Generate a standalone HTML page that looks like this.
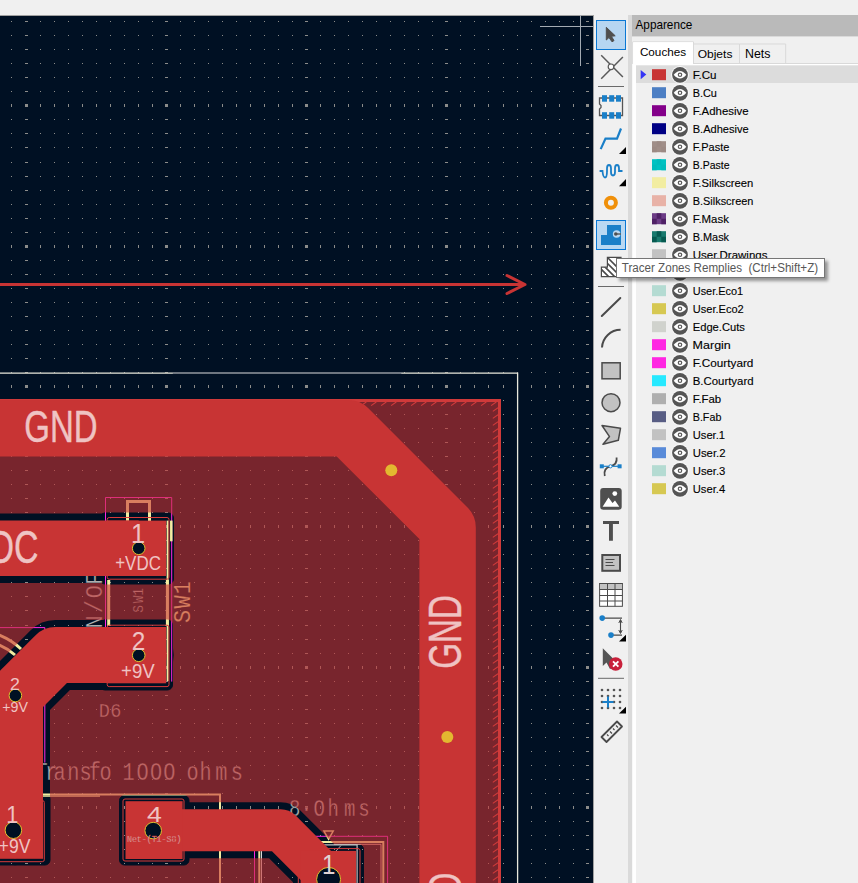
<!DOCTYPE html>
<html><head><meta charset="utf-8">
<style>
html,body{margin:0;padding:0;}
body{width:858px;height:883px;overflow:hidden;position:relative;background:#f0f0f0;font-family:"Liberation Sans",sans-serif;}
svg{display:block;}
</style></head><body>

<svg width="594" height="868" viewBox="0 15 594 868" style="position:absolute;left:0;top:15px;display:block" font-family="Liberation Sans, sans-serif">
<defs>
<mask id="zm" maskUnits="userSpaceOnUse" x="-20" y="0" width="620" height="900">
  <rect x="-10" y="399" width="510" height="500" fill="#fff"/>
  <g fill="#000" stroke="#000" stroke-linejoin="round" stroke-linecap="round">
    <path d="M-40 548.25L138.7 548.25" stroke-width="69.5" fill="none"/>
    <rect x="100" y="513" width="73.5" height="71" rx="5"/>
    <path d="M138.7 655L55.4 655L15 695.4L15 830.2" stroke-width="70" fill="none"/>
    <rect x="100" y="620" width="72.5" height="70" rx="5"/>
    <rect x="-30" y="794" width="80" height="71" rx="5"/>
    <path d="M153.2 830.2L280.6 830.2L328.7 878.3" stroke-width="56" fill="none"/>
    <rect x="119.5" y="795.5" width="69.5" height="69.5" rx="5"/>
    <rect x="293.5" y="844.5" width="70" height="70" rx="5"/>
  </g>
</mask>
</defs>
<rect x="0" y="15" width="594" height="868" fill="#001023"/>
<path d="M11 21h1v1h-1zM11 35h1v1h-1zM11 49h1v1h-1zM11 63h1v1h-1zM11 77h1v1h-1zM11 91h1v1h-1zM11 104h1v3h-1zM11 119h1v1h-1zM11 133h1v1h-1zM11 147h1v1h-1zM11 162h1v1h-1zM11 176h1v1h-1zM11 190h1v1h-1zM11 204h1v1h-1zM11 218h1v1h-1zM11 232h1v1h-1zM11 245h1v3h-1zM11 260h1v1h-1zM11 274h1v1h-1zM11 288h1v1h-1zM11 302h1v1h-1zM11 316h1v1h-1zM11 330h1v1h-1zM11 344h1v1h-1zM11 358h1v1h-1zM11 372h1v1h-1zM11 385h1v3h-1zM11 400h1v1h-1zM11 414h1v1h-1zM11 428h1v1h-1zM11 442h1v1h-1zM11 456h1v1h-1zM11 470h1v1h-1zM11 484h1v1h-1zM11 498h1v1h-1zM11 512h1v1h-1zM11 525h1v3h-1zM11 540h1v1h-1zM11 554h1v1h-1zM11 568h1v1h-1zM11 582h1v1h-1zM11 596h1v1h-1zM11 610h1v1h-1zM11 625h1v1h-1zM11 639h1v1h-1zM11 653h1v1h-1zM11 666h1v3h-1zM11 681h1v1h-1zM11 695h1v1h-1zM11 709h1v1h-1zM11 723h1v1h-1zM11 737h1v1h-1zM11 751h1v1h-1zM11 765h1v1h-1zM11 779h1v1h-1zM11 793h1v1h-1zM11 806h1v3h-1zM11 821h1v1h-1zM11 835h1v1h-1zM11 849h1v1h-1zM11 863h1v1h-1zM11 877h1v1h-1zM25 21h3v1h-3zM25 35h3v1h-3zM25 49h3v1h-3zM25 63h3v1h-3zM25 77h3v1h-3zM25 91h3v1h-3zM25 104h3v3h-3zM25 119h3v1h-3zM25 133h3v1h-3zM25 147h3v1h-3zM25 162h3v1h-3zM25 176h3v1h-3zM25 190h3v1h-3zM25 204h3v1h-3zM25 218h3v1h-3zM25 232h3v1h-3zM25 245h3v3h-3zM25 260h3v1h-3zM25 274h3v1h-3zM25 288h3v1h-3zM25 302h3v1h-3zM25 316h3v1h-3zM25 330h3v1h-3zM25 344h3v1h-3zM25 358h3v1h-3zM25 372h3v1h-3zM25 385h3v3h-3zM25 400h3v1h-3zM25 414h3v1h-3zM25 428h3v1h-3zM25 442h3v1h-3zM25 456h3v1h-3zM25 470h3v1h-3zM25 484h3v1h-3zM25 498h3v1h-3zM25 512h3v1h-3zM25 525h3v3h-3zM25 540h3v1h-3zM25 554h3v1h-3zM25 568h3v1h-3zM25 582h3v1h-3zM25 596h3v1h-3zM25 610h3v1h-3zM25 625h3v1h-3zM25 639h3v1h-3zM25 653h3v1h-3zM25 666h3v3h-3zM25 681h3v1h-3zM25 695h3v1h-3zM25 709h3v1h-3zM25 723h3v1h-3zM25 737h3v1h-3zM25 751h3v1h-3zM25 765h3v1h-3zM25 779h3v1h-3zM25 793h3v1h-3zM25 806h3v3h-3zM25 821h3v1h-3zM25 835h3v1h-3zM25 849h3v1h-3zM25 863h3v1h-3zM25 877h3v1h-3zM40 21h1v1h-1zM40 35h1v1h-1zM40 49h1v1h-1zM40 63h1v1h-1zM40 77h1v1h-1zM40 91h1v1h-1zM40 104h1v3h-1zM40 119h1v1h-1zM40 133h1v1h-1zM40 147h1v1h-1zM40 162h1v1h-1zM40 176h1v1h-1zM40 190h1v1h-1zM40 204h1v1h-1zM40 218h1v1h-1zM40 232h1v1h-1zM40 245h1v3h-1zM40 260h1v1h-1zM40 274h1v1h-1zM40 288h1v1h-1zM40 302h1v1h-1zM40 316h1v1h-1zM40 330h1v1h-1zM40 344h1v1h-1zM40 358h1v1h-1zM40 372h1v1h-1zM40 385h1v3h-1zM40 400h1v1h-1zM40 414h1v1h-1zM40 428h1v1h-1zM40 442h1v1h-1zM40 456h1v1h-1zM40 470h1v1h-1zM40 484h1v1h-1zM40 498h1v1h-1zM40 512h1v1h-1zM40 525h1v3h-1zM40 540h1v1h-1zM40 554h1v1h-1zM40 568h1v1h-1zM40 582h1v1h-1zM40 596h1v1h-1zM40 610h1v1h-1zM40 625h1v1h-1zM40 639h1v1h-1zM40 653h1v1h-1zM40 666h1v3h-1zM40 681h1v1h-1zM40 695h1v1h-1zM40 709h1v1h-1zM40 723h1v1h-1zM40 737h1v1h-1zM40 751h1v1h-1zM40 765h1v1h-1zM40 779h1v1h-1zM40 793h1v1h-1zM40 806h1v3h-1zM40 821h1v1h-1zM40 835h1v1h-1zM40 849h1v1h-1zM40 863h1v1h-1zM40 877h1v1h-1zM54 21h1v1h-1zM54 35h1v1h-1zM54 49h1v1h-1zM54 63h1v1h-1zM54 77h1v1h-1zM54 91h1v1h-1zM54 104h1v3h-1zM54 119h1v1h-1zM54 133h1v1h-1zM54 147h1v1h-1zM54 162h1v1h-1zM54 176h1v1h-1zM54 190h1v1h-1zM54 204h1v1h-1zM54 218h1v1h-1zM54 232h1v1h-1zM54 245h1v3h-1zM54 260h1v1h-1zM54 274h1v1h-1zM54 288h1v1h-1zM54 302h1v1h-1zM54 316h1v1h-1zM54 330h1v1h-1zM54 344h1v1h-1zM54 358h1v1h-1zM54 372h1v1h-1zM54 385h1v3h-1zM54 400h1v1h-1zM54 414h1v1h-1zM54 428h1v1h-1zM54 442h1v1h-1zM54 456h1v1h-1zM54 470h1v1h-1zM54 484h1v1h-1zM54 498h1v1h-1zM54 512h1v1h-1zM54 525h1v3h-1zM54 540h1v1h-1zM54 554h1v1h-1zM54 568h1v1h-1zM54 582h1v1h-1zM54 596h1v1h-1zM54 610h1v1h-1zM54 625h1v1h-1zM54 639h1v1h-1zM54 653h1v1h-1zM54 666h1v3h-1zM54 681h1v1h-1zM54 695h1v1h-1zM54 709h1v1h-1zM54 723h1v1h-1zM54 737h1v1h-1zM54 751h1v1h-1zM54 765h1v1h-1zM54 779h1v1h-1zM54 793h1v1h-1zM54 806h1v3h-1zM54 821h1v1h-1zM54 835h1v1h-1zM54 849h1v1h-1zM54 863h1v1h-1zM54 877h1v1h-1zM68 21h1v1h-1zM68 35h1v1h-1zM68 49h1v1h-1zM68 63h1v1h-1zM68 77h1v1h-1zM68 91h1v1h-1zM68 104h1v3h-1zM68 119h1v1h-1zM68 133h1v1h-1zM68 147h1v1h-1zM68 162h1v1h-1zM68 176h1v1h-1zM68 190h1v1h-1zM68 204h1v1h-1zM68 218h1v1h-1zM68 232h1v1h-1zM68 245h1v3h-1zM68 260h1v1h-1zM68 274h1v1h-1zM68 288h1v1h-1zM68 302h1v1h-1zM68 316h1v1h-1zM68 330h1v1h-1zM68 344h1v1h-1zM68 358h1v1h-1zM68 372h1v1h-1zM68 385h1v3h-1zM68 400h1v1h-1zM68 414h1v1h-1zM68 428h1v1h-1zM68 442h1v1h-1zM68 456h1v1h-1zM68 470h1v1h-1zM68 484h1v1h-1zM68 498h1v1h-1zM68 512h1v1h-1zM68 525h1v3h-1zM68 540h1v1h-1zM68 554h1v1h-1zM68 568h1v1h-1zM68 582h1v1h-1zM68 596h1v1h-1zM68 610h1v1h-1zM68 625h1v1h-1zM68 639h1v1h-1zM68 653h1v1h-1zM68 666h1v3h-1zM68 681h1v1h-1zM68 695h1v1h-1zM68 709h1v1h-1zM68 723h1v1h-1zM68 737h1v1h-1zM68 751h1v1h-1zM68 765h1v1h-1zM68 779h1v1h-1zM68 793h1v1h-1zM68 806h1v3h-1zM68 821h1v1h-1zM68 835h1v1h-1zM68 849h1v1h-1zM68 863h1v1h-1zM68 877h1v1h-1zM82 21h1v1h-1zM82 35h1v1h-1zM82 49h1v1h-1zM82 63h1v1h-1zM82 77h1v1h-1zM82 91h1v1h-1zM82 104h1v3h-1zM82 119h1v1h-1zM82 133h1v1h-1zM82 147h1v1h-1zM82 162h1v1h-1zM82 176h1v1h-1zM82 190h1v1h-1zM82 204h1v1h-1zM82 218h1v1h-1zM82 232h1v1h-1zM82 245h1v3h-1zM82 260h1v1h-1zM82 274h1v1h-1zM82 288h1v1h-1zM82 302h1v1h-1zM82 316h1v1h-1zM82 330h1v1h-1zM82 344h1v1h-1zM82 358h1v1h-1zM82 372h1v1h-1zM82 385h1v3h-1zM82 400h1v1h-1zM82 414h1v1h-1zM82 428h1v1h-1zM82 442h1v1h-1zM82 456h1v1h-1zM82 470h1v1h-1zM82 484h1v1h-1zM82 498h1v1h-1zM82 512h1v1h-1zM82 525h1v3h-1zM82 540h1v1h-1zM82 554h1v1h-1zM82 568h1v1h-1zM82 582h1v1h-1zM82 596h1v1h-1zM82 610h1v1h-1zM82 625h1v1h-1zM82 639h1v1h-1zM82 653h1v1h-1zM82 666h1v3h-1zM82 681h1v1h-1zM82 695h1v1h-1zM82 709h1v1h-1zM82 723h1v1h-1zM82 737h1v1h-1zM82 751h1v1h-1zM82 765h1v1h-1zM82 779h1v1h-1zM82 793h1v1h-1zM82 806h1v3h-1zM82 821h1v1h-1zM82 835h1v1h-1zM82 849h1v1h-1zM82 863h1v1h-1zM82 877h1v1h-1zM96 21h1v1h-1zM96 35h1v1h-1zM96 49h1v1h-1zM96 63h1v1h-1zM96 77h1v1h-1zM96 91h1v1h-1zM96 104h1v3h-1zM96 119h1v1h-1zM96 133h1v1h-1zM96 147h1v1h-1zM96 162h1v1h-1zM96 176h1v1h-1zM96 190h1v1h-1zM96 204h1v1h-1zM96 218h1v1h-1zM96 232h1v1h-1zM96 245h1v3h-1zM96 260h1v1h-1zM96 274h1v1h-1zM96 288h1v1h-1zM96 302h1v1h-1zM96 316h1v1h-1zM96 330h1v1h-1zM96 344h1v1h-1zM96 358h1v1h-1zM96 372h1v1h-1zM96 385h1v3h-1zM96 400h1v1h-1zM96 414h1v1h-1zM96 428h1v1h-1zM96 442h1v1h-1zM96 456h1v1h-1zM96 470h1v1h-1zM96 484h1v1h-1zM96 498h1v1h-1zM96 512h1v1h-1zM96 525h1v3h-1zM96 540h1v1h-1zM96 554h1v1h-1zM96 568h1v1h-1zM96 582h1v1h-1zM96 596h1v1h-1zM96 610h1v1h-1zM96 625h1v1h-1zM96 639h1v1h-1zM96 653h1v1h-1zM96 666h1v3h-1zM96 681h1v1h-1zM96 695h1v1h-1zM96 709h1v1h-1zM96 723h1v1h-1zM96 737h1v1h-1zM96 751h1v1h-1zM96 765h1v1h-1zM96 779h1v1h-1zM96 793h1v1h-1zM96 806h1v3h-1zM96 821h1v1h-1zM96 835h1v1h-1zM96 849h1v1h-1zM96 863h1v1h-1zM96 877h1v1h-1zM110 21h1v1h-1zM110 35h1v1h-1zM110 49h1v1h-1zM110 63h1v1h-1zM110 77h1v1h-1zM110 91h1v1h-1zM110 104h1v3h-1zM110 119h1v1h-1zM110 133h1v1h-1zM110 147h1v1h-1zM110 162h1v1h-1zM110 176h1v1h-1zM110 190h1v1h-1zM110 204h1v1h-1zM110 218h1v1h-1zM110 232h1v1h-1zM110 245h1v3h-1zM110 260h1v1h-1zM110 274h1v1h-1zM110 288h1v1h-1zM110 302h1v1h-1zM110 316h1v1h-1zM110 330h1v1h-1zM110 344h1v1h-1zM110 358h1v1h-1zM110 372h1v1h-1zM110 385h1v3h-1zM110 400h1v1h-1zM110 414h1v1h-1zM110 428h1v1h-1zM110 442h1v1h-1zM110 456h1v1h-1zM110 470h1v1h-1zM110 484h1v1h-1zM110 498h1v1h-1zM110 512h1v1h-1zM110 525h1v3h-1zM110 540h1v1h-1zM110 554h1v1h-1zM110 568h1v1h-1zM110 582h1v1h-1zM110 596h1v1h-1zM110 610h1v1h-1zM110 625h1v1h-1zM110 639h1v1h-1zM110 653h1v1h-1zM110 666h1v3h-1zM110 681h1v1h-1zM110 695h1v1h-1zM110 709h1v1h-1zM110 723h1v1h-1zM110 737h1v1h-1zM110 751h1v1h-1zM110 765h1v1h-1zM110 779h1v1h-1zM110 793h1v1h-1zM110 806h1v3h-1zM110 821h1v1h-1zM110 835h1v1h-1zM110 849h1v1h-1zM110 863h1v1h-1zM110 877h1v1h-1zM124 21h1v1h-1zM124 35h1v1h-1zM124 49h1v1h-1zM124 63h1v1h-1zM124 77h1v1h-1zM124 91h1v1h-1zM124 104h1v3h-1zM124 119h1v1h-1zM124 133h1v1h-1zM124 147h1v1h-1zM124 162h1v1h-1zM124 176h1v1h-1zM124 190h1v1h-1zM124 204h1v1h-1zM124 218h1v1h-1zM124 232h1v1h-1zM124 245h1v3h-1zM124 260h1v1h-1zM124 274h1v1h-1zM124 288h1v1h-1zM124 302h1v1h-1zM124 316h1v1h-1zM124 330h1v1h-1zM124 344h1v1h-1zM124 358h1v1h-1zM124 372h1v1h-1zM124 385h1v3h-1zM124 400h1v1h-1zM124 414h1v1h-1zM124 428h1v1h-1zM124 442h1v1h-1zM124 456h1v1h-1zM124 470h1v1h-1zM124 484h1v1h-1zM124 498h1v1h-1zM124 512h1v1h-1zM124 525h1v3h-1zM124 540h1v1h-1zM124 554h1v1h-1zM124 568h1v1h-1zM124 582h1v1h-1zM124 596h1v1h-1zM124 610h1v1h-1zM124 625h1v1h-1zM124 639h1v1h-1zM124 653h1v1h-1zM124 666h1v3h-1zM124 681h1v1h-1zM124 695h1v1h-1zM124 709h1v1h-1zM124 723h1v1h-1zM124 737h1v1h-1zM124 751h1v1h-1zM124 765h1v1h-1zM124 779h1v1h-1zM124 793h1v1h-1zM124 806h1v3h-1zM124 821h1v1h-1zM124 835h1v1h-1zM124 849h1v1h-1zM124 863h1v1h-1zM124 877h1v1h-1zM138 21h1v1h-1zM138 35h1v1h-1zM138 49h1v1h-1zM138 63h1v1h-1zM138 77h1v1h-1zM138 91h1v1h-1zM138 104h1v3h-1zM138 119h1v1h-1zM138 133h1v1h-1zM138 147h1v1h-1zM138 162h1v1h-1zM138 176h1v1h-1zM138 190h1v1h-1zM138 204h1v1h-1zM138 218h1v1h-1zM138 232h1v1h-1zM138 245h1v3h-1zM138 260h1v1h-1zM138 274h1v1h-1zM138 288h1v1h-1zM138 302h1v1h-1zM138 316h1v1h-1zM138 330h1v1h-1zM138 344h1v1h-1zM138 358h1v1h-1zM138 372h1v1h-1zM138 385h1v3h-1zM138 400h1v1h-1zM138 414h1v1h-1zM138 428h1v1h-1zM138 442h1v1h-1zM138 456h1v1h-1zM138 470h1v1h-1zM138 484h1v1h-1zM138 498h1v1h-1zM138 512h1v1h-1zM138 525h1v3h-1zM138 540h1v1h-1zM138 554h1v1h-1zM138 568h1v1h-1zM138 582h1v1h-1zM138 596h1v1h-1zM138 610h1v1h-1zM138 625h1v1h-1zM138 639h1v1h-1zM138 653h1v1h-1zM138 666h1v3h-1zM138 681h1v1h-1zM138 695h1v1h-1zM138 709h1v1h-1zM138 723h1v1h-1zM138 737h1v1h-1zM138 751h1v1h-1zM138 765h1v1h-1zM138 779h1v1h-1zM138 793h1v1h-1zM138 806h1v3h-1zM138 821h1v1h-1zM138 835h1v1h-1zM138 849h1v1h-1zM138 863h1v1h-1zM138 877h1v1h-1zM152 21h1v1h-1zM152 35h1v1h-1zM152 49h1v1h-1zM152 63h1v1h-1zM152 77h1v1h-1zM152 91h1v1h-1zM152 104h1v3h-1zM152 119h1v1h-1zM152 133h1v1h-1zM152 147h1v1h-1zM152 162h1v1h-1zM152 176h1v1h-1zM152 190h1v1h-1zM152 204h1v1h-1zM152 218h1v1h-1zM152 232h1v1h-1zM152 245h1v3h-1zM152 260h1v1h-1zM152 274h1v1h-1zM152 288h1v1h-1zM152 302h1v1h-1zM152 316h1v1h-1zM152 330h1v1h-1zM152 344h1v1h-1zM152 358h1v1h-1zM152 372h1v1h-1zM152 385h1v3h-1zM152 400h1v1h-1zM152 414h1v1h-1zM152 428h1v1h-1zM152 442h1v1h-1zM152 456h1v1h-1zM152 470h1v1h-1zM152 484h1v1h-1zM152 498h1v1h-1zM152 512h1v1h-1zM152 525h1v3h-1zM152 540h1v1h-1zM152 554h1v1h-1zM152 568h1v1h-1zM152 582h1v1h-1zM152 596h1v1h-1zM152 610h1v1h-1zM152 625h1v1h-1zM152 639h1v1h-1zM152 653h1v1h-1zM152 666h1v3h-1zM152 681h1v1h-1zM152 695h1v1h-1zM152 709h1v1h-1zM152 723h1v1h-1zM152 737h1v1h-1zM152 751h1v1h-1zM152 765h1v1h-1zM152 779h1v1h-1zM152 793h1v1h-1zM152 806h1v3h-1zM152 821h1v1h-1zM152 835h1v1h-1zM152 849h1v1h-1zM152 863h1v1h-1zM152 877h1v1h-1zM165 21h3v1h-3zM165 35h3v1h-3zM165 49h3v1h-3zM165 63h3v1h-3zM165 77h3v1h-3zM165 91h3v1h-3zM165 104h3v3h-3zM165 119h3v1h-3zM165 133h3v1h-3zM165 147h3v1h-3zM165 162h3v1h-3zM165 176h3v1h-3zM165 190h3v1h-3zM165 204h3v1h-3zM165 218h3v1h-3zM165 232h3v1h-3zM165 245h3v3h-3zM165 260h3v1h-3zM165 274h3v1h-3zM165 288h3v1h-3zM165 302h3v1h-3zM165 316h3v1h-3zM165 330h3v1h-3zM165 344h3v1h-3zM165 358h3v1h-3zM165 372h3v1h-3zM165 385h3v3h-3zM165 400h3v1h-3zM165 414h3v1h-3zM165 428h3v1h-3zM165 442h3v1h-3zM165 456h3v1h-3zM165 470h3v1h-3zM165 484h3v1h-3zM165 498h3v1h-3zM165 512h3v1h-3zM165 525h3v3h-3zM165 540h3v1h-3zM165 554h3v1h-3zM165 568h3v1h-3zM165 582h3v1h-3zM165 596h3v1h-3zM165 610h3v1h-3zM165 625h3v1h-3zM165 639h3v1h-3zM165 653h3v1h-3zM165 666h3v3h-3zM165 681h3v1h-3zM165 695h3v1h-3zM165 709h3v1h-3zM165 723h3v1h-3zM165 737h3v1h-3zM165 751h3v1h-3zM165 765h3v1h-3zM165 779h3v1h-3zM165 793h3v1h-3zM165 806h3v3h-3zM165 821h3v1h-3zM165 835h3v1h-3zM165 849h3v1h-3zM165 863h3v1h-3zM165 877h3v1h-3zM180 21h1v1h-1zM180 35h1v1h-1zM180 49h1v1h-1zM180 63h1v1h-1zM180 77h1v1h-1zM180 91h1v1h-1zM180 104h1v3h-1zM180 119h1v1h-1zM180 133h1v1h-1zM180 147h1v1h-1zM180 162h1v1h-1zM180 176h1v1h-1zM180 190h1v1h-1zM180 204h1v1h-1zM180 218h1v1h-1zM180 232h1v1h-1zM180 245h1v3h-1zM180 260h1v1h-1zM180 274h1v1h-1zM180 288h1v1h-1zM180 302h1v1h-1zM180 316h1v1h-1zM180 330h1v1h-1zM180 344h1v1h-1zM180 358h1v1h-1zM180 372h1v1h-1zM180 385h1v3h-1zM180 400h1v1h-1zM180 414h1v1h-1zM180 428h1v1h-1zM180 442h1v1h-1zM180 456h1v1h-1zM180 470h1v1h-1zM180 484h1v1h-1zM180 498h1v1h-1zM180 512h1v1h-1zM180 525h1v3h-1zM180 540h1v1h-1zM180 554h1v1h-1zM180 568h1v1h-1zM180 582h1v1h-1zM180 596h1v1h-1zM180 610h1v1h-1zM180 625h1v1h-1zM180 639h1v1h-1zM180 653h1v1h-1zM180 666h1v3h-1zM180 681h1v1h-1zM180 695h1v1h-1zM180 709h1v1h-1zM180 723h1v1h-1zM180 737h1v1h-1zM180 751h1v1h-1zM180 765h1v1h-1zM180 779h1v1h-1zM180 793h1v1h-1zM180 806h1v3h-1zM180 821h1v1h-1zM180 835h1v1h-1zM180 849h1v1h-1zM180 863h1v1h-1zM180 877h1v1h-1zM194 21h1v1h-1zM194 35h1v1h-1zM194 49h1v1h-1zM194 63h1v1h-1zM194 77h1v1h-1zM194 91h1v1h-1zM194 104h1v3h-1zM194 119h1v1h-1zM194 133h1v1h-1zM194 147h1v1h-1zM194 162h1v1h-1zM194 176h1v1h-1zM194 190h1v1h-1zM194 204h1v1h-1zM194 218h1v1h-1zM194 232h1v1h-1zM194 245h1v3h-1zM194 260h1v1h-1zM194 274h1v1h-1zM194 288h1v1h-1zM194 302h1v1h-1zM194 316h1v1h-1zM194 330h1v1h-1zM194 344h1v1h-1zM194 358h1v1h-1zM194 372h1v1h-1zM194 385h1v3h-1zM194 400h1v1h-1zM194 414h1v1h-1zM194 428h1v1h-1zM194 442h1v1h-1zM194 456h1v1h-1zM194 470h1v1h-1zM194 484h1v1h-1zM194 498h1v1h-1zM194 512h1v1h-1zM194 525h1v3h-1zM194 540h1v1h-1zM194 554h1v1h-1zM194 568h1v1h-1zM194 582h1v1h-1zM194 596h1v1h-1zM194 610h1v1h-1zM194 625h1v1h-1zM194 639h1v1h-1zM194 653h1v1h-1zM194 666h1v3h-1zM194 681h1v1h-1zM194 695h1v1h-1zM194 709h1v1h-1zM194 723h1v1h-1zM194 737h1v1h-1zM194 751h1v1h-1zM194 765h1v1h-1zM194 779h1v1h-1zM194 793h1v1h-1zM194 806h1v3h-1zM194 821h1v1h-1zM194 835h1v1h-1zM194 849h1v1h-1zM194 863h1v1h-1zM194 877h1v1h-1zM208 21h1v1h-1zM208 35h1v1h-1zM208 49h1v1h-1zM208 63h1v1h-1zM208 77h1v1h-1zM208 91h1v1h-1zM208 104h1v3h-1zM208 119h1v1h-1zM208 133h1v1h-1zM208 147h1v1h-1zM208 162h1v1h-1zM208 176h1v1h-1zM208 190h1v1h-1zM208 204h1v1h-1zM208 218h1v1h-1zM208 232h1v1h-1zM208 245h1v3h-1zM208 260h1v1h-1zM208 274h1v1h-1zM208 288h1v1h-1zM208 302h1v1h-1zM208 316h1v1h-1zM208 330h1v1h-1zM208 344h1v1h-1zM208 358h1v1h-1zM208 372h1v1h-1zM208 385h1v3h-1zM208 400h1v1h-1zM208 414h1v1h-1zM208 428h1v1h-1zM208 442h1v1h-1zM208 456h1v1h-1zM208 470h1v1h-1zM208 484h1v1h-1zM208 498h1v1h-1zM208 512h1v1h-1zM208 525h1v3h-1zM208 540h1v1h-1zM208 554h1v1h-1zM208 568h1v1h-1zM208 582h1v1h-1zM208 596h1v1h-1zM208 610h1v1h-1zM208 625h1v1h-1zM208 639h1v1h-1zM208 653h1v1h-1zM208 666h1v3h-1zM208 681h1v1h-1zM208 695h1v1h-1zM208 709h1v1h-1zM208 723h1v1h-1zM208 737h1v1h-1zM208 751h1v1h-1zM208 765h1v1h-1zM208 779h1v1h-1zM208 793h1v1h-1zM208 806h1v3h-1zM208 821h1v1h-1zM208 835h1v1h-1zM208 849h1v1h-1zM208 863h1v1h-1zM208 877h1v1h-1zM222 21h1v1h-1zM222 35h1v1h-1zM222 49h1v1h-1zM222 63h1v1h-1zM222 77h1v1h-1zM222 91h1v1h-1zM222 104h1v3h-1zM222 119h1v1h-1zM222 133h1v1h-1zM222 147h1v1h-1zM222 162h1v1h-1zM222 176h1v1h-1zM222 190h1v1h-1zM222 204h1v1h-1zM222 218h1v1h-1zM222 232h1v1h-1zM222 245h1v3h-1zM222 260h1v1h-1zM222 274h1v1h-1zM222 288h1v1h-1zM222 302h1v1h-1zM222 316h1v1h-1zM222 330h1v1h-1zM222 344h1v1h-1zM222 358h1v1h-1zM222 372h1v1h-1zM222 385h1v3h-1zM222 400h1v1h-1zM222 414h1v1h-1zM222 428h1v1h-1zM222 442h1v1h-1zM222 456h1v1h-1zM222 470h1v1h-1zM222 484h1v1h-1zM222 498h1v1h-1zM222 512h1v1h-1zM222 525h1v3h-1zM222 540h1v1h-1zM222 554h1v1h-1zM222 568h1v1h-1zM222 582h1v1h-1zM222 596h1v1h-1zM222 610h1v1h-1zM222 625h1v1h-1zM222 639h1v1h-1zM222 653h1v1h-1zM222 666h1v3h-1zM222 681h1v1h-1zM222 695h1v1h-1zM222 709h1v1h-1zM222 723h1v1h-1zM222 737h1v1h-1zM222 751h1v1h-1zM222 765h1v1h-1zM222 779h1v1h-1zM222 793h1v1h-1zM222 806h1v3h-1zM222 821h1v1h-1zM222 835h1v1h-1zM222 849h1v1h-1zM222 863h1v1h-1zM222 877h1v1h-1zM236 21h1v1h-1zM236 35h1v1h-1zM236 49h1v1h-1zM236 63h1v1h-1zM236 77h1v1h-1zM236 91h1v1h-1zM236 104h1v3h-1zM236 119h1v1h-1zM236 133h1v1h-1zM236 147h1v1h-1zM236 162h1v1h-1zM236 176h1v1h-1zM236 190h1v1h-1zM236 204h1v1h-1zM236 218h1v1h-1zM236 232h1v1h-1zM236 245h1v3h-1zM236 260h1v1h-1zM236 274h1v1h-1zM236 288h1v1h-1zM236 302h1v1h-1zM236 316h1v1h-1zM236 330h1v1h-1zM236 344h1v1h-1zM236 358h1v1h-1zM236 372h1v1h-1zM236 385h1v3h-1zM236 400h1v1h-1zM236 414h1v1h-1zM236 428h1v1h-1zM236 442h1v1h-1zM236 456h1v1h-1zM236 470h1v1h-1zM236 484h1v1h-1zM236 498h1v1h-1zM236 512h1v1h-1zM236 525h1v3h-1zM236 540h1v1h-1zM236 554h1v1h-1zM236 568h1v1h-1zM236 582h1v1h-1zM236 596h1v1h-1zM236 610h1v1h-1zM236 625h1v1h-1zM236 639h1v1h-1zM236 653h1v1h-1zM236 666h1v3h-1zM236 681h1v1h-1zM236 695h1v1h-1zM236 709h1v1h-1zM236 723h1v1h-1zM236 737h1v1h-1zM236 751h1v1h-1zM236 765h1v1h-1zM236 779h1v1h-1zM236 793h1v1h-1zM236 806h1v3h-1zM236 821h1v1h-1zM236 835h1v1h-1zM236 849h1v1h-1zM236 863h1v1h-1zM236 877h1v1h-1zM250 21h1v1h-1zM250 35h1v1h-1zM250 49h1v1h-1zM250 63h1v1h-1zM250 77h1v1h-1zM250 91h1v1h-1zM250 104h1v3h-1zM250 119h1v1h-1zM250 133h1v1h-1zM250 147h1v1h-1zM250 162h1v1h-1zM250 176h1v1h-1zM250 190h1v1h-1zM250 204h1v1h-1zM250 218h1v1h-1zM250 232h1v1h-1zM250 245h1v3h-1zM250 260h1v1h-1zM250 274h1v1h-1zM250 288h1v1h-1zM250 302h1v1h-1zM250 316h1v1h-1zM250 330h1v1h-1zM250 344h1v1h-1zM250 358h1v1h-1zM250 372h1v1h-1zM250 385h1v3h-1zM250 400h1v1h-1zM250 414h1v1h-1zM250 428h1v1h-1zM250 442h1v1h-1zM250 456h1v1h-1zM250 470h1v1h-1zM250 484h1v1h-1zM250 498h1v1h-1zM250 512h1v1h-1zM250 525h1v3h-1zM250 540h1v1h-1zM250 554h1v1h-1zM250 568h1v1h-1zM250 582h1v1h-1zM250 596h1v1h-1zM250 610h1v1h-1zM250 625h1v1h-1zM250 639h1v1h-1zM250 653h1v1h-1zM250 666h1v3h-1zM250 681h1v1h-1zM250 695h1v1h-1zM250 709h1v1h-1zM250 723h1v1h-1zM250 737h1v1h-1zM250 751h1v1h-1zM250 765h1v1h-1zM250 779h1v1h-1zM250 793h1v1h-1zM250 806h1v3h-1zM250 821h1v1h-1zM250 835h1v1h-1zM250 849h1v1h-1zM250 863h1v1h-1zM250 877h1v1h-1zM264 21h1v1h-1zM264 35h1v1h-1zM264 49h1v1h-1zM264 63h1v1h-1zM264 77h1v1h-1zM264 91h1v1h-1zM264 104h1v3h-1zM264 119h1v1h-1zM264 133h1v1h-1zM264 147h1v1h-1zM264 162h1v1h-1zM264 176h1v1h-1zM264 190h1v1h-1zM264 204h1v1h-1zM264 218h1v1h-1zM264 232h1v1h-1zM264 245h1v3h-1zM264 260h1v1h-1zM264 274h1v1h-1zM264 288h1v1h-1zM264 302h1v1h-1zM264 316h1v1h-1zM264 330h1v1h-1zM264 344h1v1h-1zM264 358h1v1h-1zM264 372h1v1h-1zM264 385h1v3h-1zM264 400h1v1h-1zM264 414h1v1h-1zM264 428h1v1h-1zM264 442h1v1h-1zM264 456h1v1h-1zM264 470h1v1h-1zM264 484h1v1h-1zM264 498h1v1h-1zM264 512h1v1h-1zM264 525h1v3h-1zM264 540h1v1h-1zM264 554h1v1h-1zM264 568h1v1h-1zM264 582h1v1h-1zM264 596h1v1h-1zM264 610h1v1h-1zM264 625h1v1h-1zM264 639h1v1h-1zM264 653h1v1h-1zM264 666h1v3h-1zM264 681h1v1h-1zM264 695h1v1h-1zM264 709h1v1h-1zM264 723h1v1h-1zM264 737h1v1h-1zM264 751h1v1h-1zM264 765h1v1h-1zM264 779h1v1h-1zM264 793h1v1h-1zM264 806h1v3h-1zM264 821h1v1h-1zM264 835h1v1h-1zM264 849h1v1h-1zM264 863h1v1h-1zM264 877h1v1h-1zM278 21h1v1h-1zM278 35h1v1h-1zM278 49h1v1h-1zM278 63h1v1h-1zM278 77h1v1h-1zM278 91h1v1h-1zM278 104h1v3h-1zM278 119h1v1h-1zM278 133h1v1h-1zM278 147h1v1h-1zM278 162h1v1h-1zM278 176h1v1h-1zM278 190h1v1h-1zM278 204h1v1h-1zM278 218h1v1h-1zM278 232h1v1h-1zM278 245h1v3h-1zM278 260h1v1h-1zM278 274h1v1h-1zM278 288h1v1h-1zM278 302h1v1h-1zM278 316h1v1h-1zM278 330h1v1h-1zM278 344h1v1h-1zM278 358h1v1h-1zM278 372h1v1h-1zM278 385h1v3h-1zM278 400h1v1h-1zM278 414h1v1h-1zM278 428h1v1h-1zM278 442h1v1h-1zM278 456h1v1h-1zM278 470h1v1h-1zM278 484h1v1h-1zM278 498h1v1h-1zM278 512h1v1h-1zM278 525h1v3h-1zM278 540h1v1h-1zM278 554h1v1h-1zM278 568h1v1h-1zM278 582h1v1h-1zM278 596h1v1h-1zM278 610h1v1h-1zM278 625h1v1h-1zM278 639h1v1h-1zM278 653h1v1h-1zM278 666h1v3h-1zM278 681h1v1h-1zM278 695h1v1h-1zM278 709h1v1h-1zM278 723h1v1h-1zM278 737h1v1h-1zM278 751h1v1h-1zM278 765h1v1h-1zM278 779h1v1h-1zM278 793h1v1h-1zM278 806h1v3h-1zM278 821h1v1h-1zM278 835h1v1h-1zM278 849h1v1h-1zM278 863h1v1h-1zM278 877h1v1h-1zM292 21h1v1h-1zM292 35h1v1h-1zM292 49h1v1h-1zM292 63h1v1h-1zM292 77h1v1h-1zM292 91h1v1h-1zM292 104h1v3h-1zM292 119h1v1h-1zM292 133h1v1h-1zM292 147h1v1h-1zM292 162h1v1h-1zM292 176h1v1h-1zM292 190h1v1h-1zM292 204h1v1h-1zM292 218h1v1h-1zM292 232h1v1h-1zM292 245h1v3h-1zM292 260h1v1h-1zM292 274h1v1h-1zM292 288h1v1h-1zM292 302h1v1h-1zM292 316h1v1h-1zM292 330h1v1h-1zM292 344h1v1h-1zM292 358h1v1h-1zM292 372h1v1h-1zM292 385h1v3h-1zM292 400h1v1h-1zM292 414h1v1h-1zM292 428h1v1h-1zM292 442h1v1h-1zM292 456h1v1h-1zM292 470h1v1h-1zM292 484h1v1h-1zM292 498h1v1h-1zM292 512h1v1h-1zM292 525h1v3h-1zM292 540h1v1h-1zM292 554h1v1h-1zM292 568h1v1h-1zM292 582h1v1h-1zM292 596h1v1h-1zM292 610h1v1h-1zM292 625h1v1h-1zM292 639h1v1h-1zM292 653h1v1h-1zM292 666h1v3h-1zM292 681h1v1h-1zM292 695h1v1h-1zM292 709h1v1h-1zM292 723h1v1h-1zM292 737h1v1h-1zM292 751h1v1h-1zM292 765h1v1h-1zM292 779h1v1h-1zM292 793h1v1h-1zM292 806h1v3h-1zM292 821h1v1h-1zM292 835h1v1h-1zM292 849h1v1h-1zM292 863h1v1h-1zM292 877h1v1h-1zM305 21h3v1h-3zM305 35h3v1h-3zM305 49h3v1h-3zM305 63h3v1h-3zM305 77h3v1h-3zM305 91h3v1h-3zM305 104h3v3h-3zM305 119h3v1h-3zM305 133h3v1h-3zM305 147h3v1h-3zM305 162h3v1h-3zM305 176h3v1h-3zM305 190h3v1h-3zM305 204h3v1h-3zM305 218h3v1h-3zM305 232h3v1h-3zM305 245h3v3h-3zM305 260h3v1h-3zM305 274h3v1h-3zM305 288h3v1h-3zM305 302h3v1h-3zM305 316h3v1h-3zM305 330h3v1h-3zM305 344h3v1h-3zM305 358h3v1h-3zM305 372h3v1h-3zM305 385h3v3h-3zM305 400h3v1h-3zM305 414h3v1h-3zM305 428h3v1h-3zM305 442h3v1h-3zM305 456h3v1h-3zM305 470h3v1h-3zM305 484h3v1h-3zM305 498h3v1h-3zM305 512h3v1h-3zM305 525h3v3h-3zM305 540h3v1h-3zM305 554h3v1h-3zM305 568h3v1h-3zM305 582h3v1h-3zM305 596h3v1h-3zM305 610h3v1h-3zM305 625h3v1h-3zM305 639h3v1h-3zM305 653h3v1h-3zM305 666h3v3h-3zM305 681h3v1h-3zM305 695h3v1h-3zM305 709h3v1h-3zM305 723h3v1h-3zM305 737h3v1h-3zM305 751h3v1h-3zM305 765h3v1h-3zM305 779h3v1h-3zM305 793h3v1h-3zM305 806h3v3h-3zM305 821h3v1h-3zM305 835h3v1h-3zM305 849h3v1h-3zM305 863h3v1h-3zM305 877h3v1h-3zM320 21h1v1h-1zM320 35h1v1h-1zM320 49h1v1h-1zM320 63h1v1h-1zM320 77h1v1h-1zM320 91h1v1h-1zM320 104h1v3h-1zM320 119h1v1h-1zM320 133h1v1h-1zM320 147h1v1h-1zM320 162h1v1h-1zM320 176h1v1h-1zM320 190h1v1h-1zM320 204h1v1h-1zM320 218h1v1h-1zM320 232h1v1h-1zM320 245h1v3h-1zM320 260h1v1h-1zM320 274h1v1h-1zM320 288h1v1h-1zM320 302h1v1h-1zM320 316h1v1h-1zM320 330h1v1h-1zM320 344h1v1h-1zM320 358h1v1h-1zM320 372h1v1h-1zM320 385h1v3h-1zM320 400h1v1h-1zM320 414h1v1h-1zM320 428h1v1h-1zM320 442h1v1h-1zM320 456h1v1h-1zM320 470h1v1h-1zM320 484h1v1h-1zM320 498h1v1h-1zM320 512h1v1h-1zM320 525h1v3h-1zM320 540h1v1h-1zM320 554h1v1h-1zM320 568h1v1h-1zM320 582h1v1h-1zM320 596h1v1h-1zM320 610h1v1h-1zM320 625h1v1h-1zM320 639h1v1h-1zM320 653h1v1h-1zM320 666h1v3h-1zM320 681h1v1h-1zM320 695h1v1h-1zM320 709h1v1h-1zM320 723h1v1h-1zM320 737h1v1h-1zM320 751h1v1h-1zM320 765h1v1h-1zM320 779h1v1h-1zM320 793h1v1h-1zM320 806h1v3h-1zM320 821h1v1h-1zM320 835h1v1h-1zM320 849h1v1h-1zM320 863h1v1h-1zM320 877h1v1h-1zM334 21h1v1h-1zM334 35h1v1h-1zM334 49h1v1h-1zM334 63h1v1h-1zM334 77h1v1h-1zM334 91h1v1h-1zM334 104h1v3h-1zM334 119h1v1h-1zM334 133h1v1h-1zM334 147h1v1h-1zM334 162h1v1h-1zM334 176h1v1h-1zM334 190h1v1h-1zM334 204h1v1h-1zM334 218h1v1h-1zM334 232h1v1h-1zM334 245h1v3h-1zM334 260h1v1h-1zM334 274h1v1h-1zM334 288h1v1h-1zM334 302h1v1h-1zM334 316h1v1h-1zM334 330h1v1h-1zM334 344h1v1h-1zM334 358h1v1h-1zM334 372h1v1h-1zM334 385h1v3h-1zM334 400h1v1h-1zM334 414h1v1h-1zM334 428h1v1h-1zM334 442h1v1h-1zM334 456h1v1h-1zM334 470h1v1h-1zM334 484h1v1h-1zM334 498h1v1h-1zM334 512h1v1h-1zM334 525h1v3h-1zM334 540h1v1h-1zM334 554h1v1h-1zM334 568h1v1h-1zM334 582h1v1h-1zM334 596h1v1h-1zM334 610h1v1h-1zM334 625h1v1h-1zM334 639h1v1h-1zM334 653h1v1h-1zM334 666h1v3h-1zM334 681h1v1h-1zM334 695h1v1h-1zM334 709h1v1h-1zM334 723h1v1h-1zM334 737h1v1h-1zM334 751h1v1h-1zM334 765h1v1h-1zM334 779h1v1h-1zM334 793h1v1h-1zM334 806h1v3h-1zM334 821h1v1h-1zM334 835h1v1h-1zM334 849h1v1h-1zM334 863h1v1h-1zM334 877h1v1h-1zM348 21h1v1h-1zM348 35h1v1h-1zM348 49h1v1h-1zM348 63h1v1h-1zM348 77h1v1h-1zM348 91h1v1h-1zM348 104h1v3h-1zM348 119h1v1h-1zM348 133h1v1h-1zM348 147h1v1h-1zM348 162h1v1h-1zM348 176h1v1h-1zM348 190h1v1h-1zM348 204h1v1h-1zM348 218h1v1h-1zM348 232h1v1h-1zM348 245h1v3h-1zM348 260h1v1h-1zM348 274h1v1h-1zM348 288h1v1h-1zM348 302h1v1h-1zM348 316h1v1h-1zM348 330h1v1h-1zM348 344h1v1h-1zM348 358h1v1h-1zM348 372h1v1h-1zM348 385h1v3h-1zM348 400h1v1h-1zM348 414h1v1h-1zM348 428h1v1h-1zM348 442h1v1h-1zM348 456h1v1h-1zM348 470h1v1h-1zM348 484h1v1h-1zM348 498h1v1h-1zM348 512h1v1h-1zM348 525h1v3h-1zM348 540h1v1h-1zM348 554h1v1h-1zM348 568h1v1h-1zM348 582h1v1h-1zM348 596h1v1h-1zM348 610h1v1h-1zM348 625h1v1h-1zM348 639h1v1h-1zM348 653h1v1h-1zM348 666h1v3h-1zM348 681h1v1h-1zM348 695h1v1h-1zM348 709h1v1h-1zM348 723h1v1h-1zM348 737h1v1h-1zM348 751h1v1h-1zM348 765h1v1h-1zM348 779h1v1h-1zM348 793h1v1h-1zM348 806h1v3h-1zM348 821h1v1h-1zM348 835h1v1h-1zM348 849h1v1h-1zM348 863h1v1h-1zM348 877h1v1h-1zM362 21h1v1h-1zM362 35h1v1h-1zM362 49h1v1h-1zM362 63h1v1h-1zM362 77h1v1h-1zM362 91h1v1h-1zM362 104h1v3h-1zM362 119h1v1h-1zM362 133h1v1h-1zM362 147h1v1h-1zM362 162h1v1h-1zM362 176h1v1h-1zM362 190h1v1h-1zM362 204h1v1h-1zM362 218h1v1h-1zM362 232h1v1h-1zM362 245h1v3h-1zM362 260h1v1h-1zM362 274h1v1h-1zM362 288h1v1h-1zM362 302h1v1h-1zM362 316h1v1h-1zM362 330h1v1h-1zM362 344h1v1h-1zM362 358h1v1h-1zM362 372h1v1h-1zM362 385h1v3h-1zM362 400h1v1h-1zM362 414h1v1h-1zM362 428h1v1h-1zM362 442h1v1h-1zM362 456h1v1h-1zM362 470h1v1h-1zM362 484h1v1h-1zM362 498h1v1h-1zM362 512h1v1h-1zM362 525h1v3h-1zM362 540h1v1h-1zM362 554h1v1h-1zM362 568h1v1h-1zM362 582h1v1h-1zM362 596h1v1h-1zM362 610h1v1h-1zM362 625h1v1h-1zM362 639h1v1h-1zM362 653h1v1h-1zM362 666h1v3h-1zM362 681h1v1h-1zM362 695h1v1h-1zM362 709h1v1h-1zM362 723h1v1h-1zM362 737h1v1h-1zM362 751h1v1h-1zM362 765h1v1h-1zM362 779h1v1h-1zM362 793h1v1h-1zM362 806h1v3h-1zM362 821h1v1h-1zM362 835h1v1h-1zM362 849h1v1h-1zM362 863h1v1h-1zM362 877h1v1h-1zM376 21h1v1h-1zM376 35h1v1h-1zM376 49h1v1h-1zM376 63h1v1h-1zM376 77h1v1h-1zM376 91h1v1h-1zM376 104h1v3h-1zM376 119h1v1h-1zM376 133h1v1h-1zM376 147h1v1h-1zM376 162h1v1h-1zM376 176h1v1h-1zM376 190h1v1h-1zM376 204h1v1h-1zM376 218h1v1h-1zM376 232h1v1h-1zM376 245h1v3h-1zM376 260h1v1h-1zM376 274h1v1h-1zM376 288h1v1h-1zM376 302h1v1h-1zM376 316h1v1h-1zM376 330h1v1h-1zM376 344h1v1h-1zM376 358h1v1h-1zM376 372h1v1h-1zM376 385h1v3h-1zM376 400h1v1h-1zM376 414h1v1h-1zM376 428h1v1h-1zM376 442h1v1h-1zM376 456h1v1h-1zM376 470h1v1h-1zM376 484h1v1h-1zM376 498h1v1h-1zM376 512h1v1h-1zM376 525h1v3h-1zM376 540h1v1h-1zM376 554h1v1h-1zM376 568h1v1h-1zM376 582h1v1h-1zM376 596h1v1h-1zM376 610h1v1h-1zM376 625h1v1h-1zM376 639h1v1h-1zM376 653h1v1h-1zM376 666h1v3h-1zM376 681h1v1h-1zM376 695h1v1h-1zM376 709h1v1h-1zM376 723h1v1h-1zM376 737h1v1h-1zM376 751h1v1h-1zM376 765h1v1h-1zM376 779h1v1h-1zM376 793h1v1h-1zM376 806h1v3h-1zM376 821h1v1h-1zM376 835h1v1h-1zM376 849h1v1h-1zM376 863h1v1h-1zM376 877h1v1h-1zM390 21h1v1h-1zM390 35h1v1h-1zM390 49h1v1h-1zM390 63h1v1h-1zM390 77h1v1h-1zM390 91h1v1h-1zM390 104h1v3h-1zM390 119h1v1h-1zM390 133h1v1h-1zM390 147h1v1h-1zM390 162h1v1h-1zM390 176h1v1h-1zM390 190h1v1h-1zM390 204h1v1h-1zM390 218h1v1h-1zM390 232h1v1h-1zM390 245h1v3h-1zM390 260h1v1h-1zM390 274h1v1h-1zM390 288h1v1h-1zM390 302h1v1h-1zM390 316h1v1h-1zM390 330h1v1h-1zM390 344h1v1h-1zM390 358h1v1h-1zM390 372h1v1h-1zM390 385h1v3h-1zM390 400h1v1h-1zM390 414h1v1h-1zM390 428h1v1h-1zM390 442h1v1h-1zM390 456h1v1h-1zM390 470h1v1h-1zM390 484h1v1h-1zM390 498h1v1h-1zM390 512h1v1h-1zM390 525h1v3h-1zM390 540h1v1h-1zM390 554h1v1h-1zM390 568h1v1h-1zM390 582h1v1h-1zM390 596h1v1h-1zM390 610h1v1h-1zM390 625h1v1h-1zM390 639h1v1h-1zM390 653h1v1h-1zM390 666h1v3h-1zM390 681h1v1h-1zM390 695h1v1h-1zM390 709h1v1h-1zM390 723h1v1h-1zM390 737h1v1h-1zM390 751h1v1h-1zM390 765h1v1h-1zM390 779h1v1h-1zM390 793h1v1h-1zM390 806h1v3h-1zM390 821h1v1h-1zM390 835h1v1h-1zM390 849h1v1h-1zM390 863h1v1h-1zM390 877h1v1h-1zM404 21h1v1h-1zM404 35h1v1h-1zM404 49h1v1h-1zM404 63h1v1h-1zM404 77h1v1h-1zM404 91h1v1h-1zM404 104h1v3h-1zM404 119h1v1h-1zM404 133h1v1h-1zM404 147h1v1h-1zM404 162h1v1h-1zM404 176h1v1h-1zM404 190h1v1h-1zM404 204h1v1h-1zM404 218h1v1h-1zM404 232h1v1h-1zM404 245h1v3h-1zM404 260h1v1h-1zM404 274h1v1h-1zM404 288h1v1h-1zM404 302h1v1h-1zM404 316h1v1h-1zM404 330h1v1h-1zM404 344h1v1h-1zM404 358h1v1h-1zM404 372h1v1h-1zM404 385h1v3h-1zM404 400h1v1h-1zM404 414h1v1h-1zM404 428h1v1h-1zM404 442h1v1h-1zM404 456h1v1h-1zM404 470h1v1h-1zM404 484h1v1h-1zM404 498h1v1h-1zM404 512h1v1h-1zM404 525h1v3h-1zM404 540h1v1h-1zM404 554h1v1h-1zM404 568h1v1h-1zM404 582h1v1h-1zM404 596h1v1h-1zM404 610h1v1h-1zM404 625h1v1h-1zM404 639h1v1h-1zM404 653h1v1h-1zM404 666h1v3h-1zM404 681h1v1h-1zM404 695h1v1h-1zM404 709h1v1h-1zM404 723h1v1h-1zM404 737h1v1h-1zM404 751h1v1h-1zM404 765h1v1h-1zM404 779h1v1h-1zM404 793h1v1h-1zM404 806h1v3h-1zM404 821h1v1h-1zM404 835h1v1h-1zM404 849h1v1h-1zM404 863h1v1h-1zM404 877h1v1h-1zM418 21h1v1h-1zM418 35h1v1h-1zM418 49h1v1h-1zM418 63h1v1h-1zM418 77h1v1h-1zM418 91h1v1h-1zM418 104h1v3h-1zM418 119h1v1h-1zM418 133h1v1h-1zM418 147h1v1h-1zM418 162h1v1h-1zM418 176h1v1h-1zM418 190h1v1h-1zM418 204h1v1h-1zM418 218h1v1h-1zM418 232h1v1h-1zM418 245h1v3h-1zM418 260h1v1h-1zM418 274h1v1h-1zM418 288h1v1h-1zM418 302h1v1h-1zM418 316h1v1h-1zM418 330h1v1h-1zM418 344h1v1h-1zM418 358h1v1h-1zM418 372h1v1h-1zM418 385h1v3h-1zM418 400h1v1h-1zM418 414h1v1h-1zM418 428h1v1h-1zM418 442h1v1h-1zM418 456h1v1h-1zM418 470h1v1h-1zM418 484h1v1h-1zM418 498h1v1h-1zM418 512h1v1h-1zM418 525h1v3h-1zM418 540h1v1h-1zM418 554h1v1h-1zM418 568h1v1h-1zM418 582h1v1h-1zM418 596h1v1h-1zM418 610h1v1h-1zM418 625h1v1h-1zM418 639h1v1h-1zM418 653h1v1h-1zM418 666h1v3h-1zM418 681h1v1h-1zM418 695h1v1h-1zM418 709h1v1h-1zM418 723h1v1h-1zM418 737h1v1h-1zM418 751h1v1h-1zM418 765h1v1h-1zM418 779h1v1h-1zM418 793h1v1h-1zM418 806h1v3h-1zM418 821h1v1h-1zM418 835h1v1h-1zM418 849h1v1h-1zM418 863h1v1h-1zM418 877h1v1h-1zM432 21h1v1h-1zM432 35h1v1h-1zM432 49h1v1h-1zM432 63h1v1h-1zM432 77h1v1h-1zM432 91h1v1h-1zM432 104h1v3h-1zM432 119h1v1h-1zM432 133h1v1h-1zM432 147h1v1h-1zM432 162h1v1h-1zM432 176h1v1h-1zM432 190h1v1h-1zM432 204h1v1h-1zM432 218h1v1h-1zM432 232h1v1h-1zM432 245h1v3h-1zM432 260h1v1h-1zM432 274h1v1h-1zM432 288h1v1h-1zM432 302h1v1h-1zM432 316h1v1h-1zM432 330h1v1h-1zM432 344h1v1h-1zM432 358h1v1h-1zM432 372h1v1h-1zM432 385h1v3h-1zM432 400h1v1h-1zM432 414h1v1h-1zM432 428h1v1h-1zM432 442h1v1h-1zM432 456h1v1h-1zM432 470h1v1h-1zM432 484h1v1h-1zM432 498h1v1h-1zM432 512h1v1h-1zM432 525h1v3h-1zM432 540h1v1h-1zM432 554h1v1h-1zM432 568h1v1h-1zM432 582h1v1h-1zM432 596h1v1h-1zM432 610h1v1h-1zM432 625h1v1h-1zM432 639h1v1h-1zM432 653h1v1h-1zM432 666h1v3h-1zM432 681h1v1h-1zM432 695h1v1h-1zM432 709h1v1h-1zM432 723h1v1h-1zM432 737h1v1h-1zM432 751h1v1h-1zM432 765h1v1h-1zM432 779h1v1h-1zM432 793h1v1h-1zM432 806h1v3h-1zM432 821h1v1h-1zM432 835h1v1h-1zM432 849h1v1h-1zM432 863h1v1h-1zM432 877h1v1h-1zM445 21h3v1h-3zM445 35h3v1h-3zM445 49h3v1h-3zM445 63h3v1h-3zM445 77h3v1h-3zM445 91h3v1h-3zM445 104h3v3h-3zM445 119h3v1h-3zM445 133h3v1h-3zM445 147h3v1h-3zM445 162h3v1h-3zM445 176h3v1h-3zM445 190h3v1h-3zM445 204h3v1h-3zM445 218h3v1h-3zM445 232h3v1h-3zM445 245h3v3h-3zM445 260h3v1h-3zM445 274h3v1h-3zM445 288h3v1h-3zM445 302h3v1h-3zM445 316h3v1h-3zM445 330h3v1h-3zM445 344h3v1h-3zM445 358h3v1h-3zM445 372h3v1h-3zM445 385h3v3h-3zM445 400h3v1h-3zM445 414h3v1h-3zM445 428h3v1h-3zM445 442h3v1h-3zM445 456h3v1h-3zM445 470h3v1h-3zM445 484h3v1h-3zM445 498h3v1h-3zM445 512h3v1h-3zM445 525h3v3h-3zM445 540h3v1h-3zM445 554h3v1h-3zM445 568h3v1h-3zM445 582h3v1h-3zM445 596h3v1h-3zM445 610h3v1h-3zM445 625h3v1h-3zM445 639h3v1h-3zM445 653h3v1h-3zM445 666h3v3h-3zM445 681h3v1h-3zM445 695h3v1h-3zM445 709h3v1h-3zM445 723h3v1h-3zM445 737h3v1h-3zM445 751h3v1h-3zM445 765h3v1h-3zM445 779h3v1h-3zM445 793h3v1h-3zM445 806h3v3h-3zM445 821h3v1h-3zM445 835h3v1h-3zM445 849h3v1h-3zM445 863h3v1h-3zM445 877h3v1h-3zM460 21h1v1h-1zM460 35h1v1h-1zM460 49h1v1h-1zM460 63h1v1h-1zM460 77h1v1h-1zM460 91h1v1h-1zM460 104h1v3h-1zM460 119h1v1h-1zM460 133h1v1h-1zM460 147h1v1h-1zM460 162h1v1h-1zM460 176h1v1h-1zM460 190h1v1h-1zM460 204h1v1h-1zM460 218h1v1h-1zM460 232h1v1h-1zM460 245h1v3h-1zM460 260h1v1h-1zM460 274h1v1h-1zM460 288h1v1h-1zM460 302h1v1h-1zM460 316h1v1h-1zM460 330h1v1h-1zM460 344h1v1h-1zM460 358h1v1h-1zM460 372h1v1h-1zM460 385h1v3h-1zM460 400h1v1h-1zM460 414h1v1h-1zM460 428h1v1h-1zM460 442h1v1h-1zM460 456h1v1h-1zM460 470h1v1h-1zM460 484h1v1h-1zM460 498h1v1h-1zM460 512h1v1h-1zM460 525h1v3h-1zM460 540h1v1h-1zM460 554h1v1h-1zM460 568h1v1h-1zM460 582h1v1h-1zM460 596h1v1h-1zM460 610h1v1h-1zM460 625h1v1h-1zM460 639h1v1h-1zM460 653h1v1h-1zM460 666h1v3h-1zM460 681h1v1h-1zM460 695h1v1h-1zM460 709h1v1h-1zM460 723h1v1h-1zM460 737h1v1h-1zM460 751h1v1h-1zM460 765h1v1h-1zM460 779h1v1h-1zM460 793h1v1h-1zM460 806h1v3h-1zM460 821h1v1h-1zM460 835h1v1h-1zM460 849h1v1h-1zM460 863h1v1h-1zM460 877h1v1h-1zM474 21h1v1h-1zM474 35h1v1h-1zM474 49h1v1h-1zM474 63h1v1h-1zM474 77h1v1h-1zM474 91h1v1h-1zM474 104h1v3h-1zM474 119h1v1h-1zM474 133h1v1h-1zM474 147h1v1h-1zM474 162h1v1h-1zM474 176h1v1h-1zM474 190h1v1h-1zM474 204h1v1h-1zM474 218h1v1h-1zM474 232h1v1h-1zM474 245h1v3h-1zM474 260h1v1h-1zM474 274h1v1h-1zM474 288h1v1h-1zM474 302h1v1h-1zM474 316h1v1h-1zM474 330h1v1h-1zM474 344h1v1h-1zM474 358h1v1h-1zM474 372h1v1h-1zM474 385h1v3h-1zM474 400h1v1h-1zM474 414h1v1h-1zM474 428h1v1h-1zM474 442h1v1h-1zM474 456h1v1h-1zM474 470h1v1h-1zM474 484h1v1h-1zM474 498h1v1h-1zM474 512h1v1h-1zM474 525h1v3h-1zM474 540h1v1h-1zM474 554h1v1h-1zM474 568h1v1h-1zM474 582h1v1h-1zM474 596h1v1h-1zM474 610h1v1h-1zM474 625h1v1h-1zM474 639h1v1h-1zM474 653h1v1h-1zM474 666h1v3h-1zM474 681h1v1h-1zM474 695h1v1h-1zM474 709h1v1h-1zM474 723h1v1h-1zM474 737h1v1h-1zM474 751h1v1h-1zM474 765h1v1h-1zM474 779h1v1h-1zM474 793h1v1h-1zM474 806h1v3h-1zM474 821h1v1h-1zM474 835h1v1h-1zM474 849h1v1h-1zM474 863h1v1h-1zM474 877h1v1h-1zM488 21h1v1h-1zM488 35h1v1h-1zM488 49h1v1h-1zM488 63h1v1h-1zM488 77h1v1h-1zM488 91h1v1h-1zM488 104h1v3h-1zM488 119h1v1h-1zM488 133h1v1h-1zM488 147h1v1h-1zM488 162h1v1h-1zM488 176h1v1h-1zM488 190h1v1h-1zM488 204h1v1h-1zM488 218h1v1h-1zM488 232h1v1h-1zM488 245h1v3h-1zM488 260h1v1h-1zM488 274h1v1h-1zM488 288h1v1h-1zM488 302h1v1h-1zM488 316h1v1h-1zM488 330h1v1h-1zM488 344h1v1h-1zM488 358h1v1h-1zM488 372h1v1h-1zM488 385h1v3h-1zM488 400h1v1h-1zM488 414h1v1h-1zM488 428h1v1h-1zM488 442h1v1h-1zM488 456h1v1h-1zM488 470h1v1h-1zM488 484h1v1h-1zM488 498h1v1h-1zM488 512h1v1h-1zM488 525h1v3h-1zM488 540h1v1h-1zM488 554h1v1h-1zM488 568h1v1h-1zM488 582h1v1h-1zM488 596h1v1h-1zM488 610h1v1h-1zM488 625h1v1h-1zM488 639h1v1h-1zM488 653h1v1h-1zM488 666h1v3h-1zM488 681h1v1h-1zM488 695h1v1h-1zM488 709h1v1h-1zM488 723h1v1h-1zM488 737h1v1h-1zM488 751h1v1h-1zM488 765h1v1h-1zM488 779h1v1h-1zM488 793h1v1h-1zM488 806h1v3h-1zM488 821h1v1h-1zM488 835h1v1h-1zM488 849h1v1h-1zM488 863h1v1h-1zM488 877h1v1h-1zM503 21h1v1h-1zM503 35h1v1h-1zM503 49h1v1h-1zM503 63h1v1h-1zM503 77h1v1h-1zM503 91h1v1h-1zM503 104h1v3h-1zM503 119h1v1h-1zM503 133h1v1h-1zM503 147h1v1h-1zM503 162h1v1h-1zM503 176h1v1h-1zM503 190h1v1h-1zM503 204h1v1h-1zM503 218h1v1h-1zM503 232h1v1h-1zM503 245h1v3h-1zM503 260h1v1h-1zM503 274h1v1h-1zM503 288h1v1h-1zM503 302h1v1h-1zM503 316h1v1h-1zM503 330h1v1h-1zM503 344h1v1h-1zM503 358h1v1h-1zM503 372h1v1h-1zM503 385h1v3h-1zM503 400h1v1h-1zM503 414h1v1h-1zM503 428h1v1h-1zM503 442h1v1h-1zM503 456h1v1h-1zM503 470h1v1h-1zM503 484h1v1h-1zM503 498h1v1h-1zM503 512h1v1h-1zM503 525h1v3h-1zM503 540h1v1h-1zM503 554h1v1h-1zM503 568h1v1h-1zM503 582h1v1h-1zM503 596h1v1h-1zM503 610h1v1h-1zM503 625h1v1h-1zM503 639h1v1h-1zM503 653h1v1h-1zM503 666h1v3h-1zM503 681h1v1h-1zM503 695h1v1h-1zM503 709h1v1h-1zM503 723h1v1h-1zM503 737h1v1h-1zM503 751h1v1h-1zM503 765h1v1h-1zM503 779h1v1h-1zM503 793h1v1h-1zM503 806h1v3h-1zM503 821h1v1h-1zM503 835h1v1h-1zM503 849h1v1h-1zM503 863h1v1h-1zM503 877h1v1h-1zM517 21h1v1h-1zM517 35h1v1h-1zM517 49h1v1h-1zM517 63h1v1h-1zM517 77h1v1h-1zM517 91h1v1h-1zM517 104h1v3h-1zM517 119h1v1h-1zM517 133h1v1h-1zM517 147h1v1h-1zM517 162h1v1h-1zM517 176h1v1h-1zM517 190h1v1h-1zM517 204h1v1h-1zM517 218h1v1h-1zM517 232h1v1h-1zM517 245h1v3h-1zM517 260h1v1h-1zM517 274h1v1h-1zM517 288h1v1h-1zM517 302h1v1h-1zM517 316h1v1h-1zM517 330h1v1h-1zM517 344h1v1h-1zM517 358h1v1h-1zM517 372h1v1h-1zM517 385h1v3h-1zM517 400h1v1h-1zM517 414h1v1h-1zM517 428h1v1h-1zM517 442h1v1h-1zM517 456h1v1h-1zM517 470h1v1h-1zM517 484h1v1h-1zM517 498h1v1h-1zM517 512h1v1h-1zM517 525h1v3h-1zM517 540h1v1h-1zM517 554h1v1h-1zM517 568h1v1h-1zM517 582h1v1h-1zM517 596h1v1h-1zM517 610h1v1h-1zM517 625h1v1h-1zM517 639h1v1h-1zM517 653h1v1h-1zM517 666h1v3h-1zM517 681h1v1h-1zM517 695h1v1h-1zM517 709h1v1h-1zM517 723h1v1h-1zM517 737h1v1h-1zM517 751h1v1h-1zM517 765h1v1h-1zM517 779h1v1h-1zM517 793h1v1h-1zM517 806h1v3h-1zM517 821h1v1h-1zM517 835h1v1h-1zM517 849h1v1h-1zM517 863h1v1h-1zM517 877h1v1h-1zM531 21h1v1h-1zM531 35h1v1h-1zM531 49h1v1h-1zM531 63h1v1h-1zM531 77h1v1h-1zM531 91h1v1h-1zM531 104h1v3h-1zM531 119h1v1h-1zM531 133h1v1h-1zM531 147h1v1h-1zM531 162h1v1h-1zM531 176h1v1h-1zM531 190h1v1h-1zM531 204h1v1h-1zM531 218h1v1h-1zM531 232h1v1h-1zM531 245h1v3h-1zM531 260h1v1h-1zM531 274h1v1h-1zM531 288h1v1h-1zM531 302h1v1h-1zM531 316h1v1h-1zM531 330h1v1h-1zM531 344h1v1h-1zM531 358h1v1h-1zM531 372h1v1h-1zM531 385h1v3h-1zM531 400h1v1h-1zM531 414h1v1h-1zM531 428h1v1h-1zM531 442h1v1h-1zM531 456h1v1h-1zM531 470h1v1h-1zM531 484h1v1h-1zM531 498h1v1h-1zM531 512h1v1h-1zM531 525h1v3h-1zM531 540h1v1h-1zM531 554h1v1h-1zM531 568h1v1h-1zM531 582h1v1h-1zM531 596h1v1h-1zM531 610h1v1h-1zM531 625h1v1h-1zM531 639h1v1h-1zM531 653h1v1h-1zM531 666h1v3h-1zM531 681h1v1h-1zM531 695h1v1h-1zM531 709h1v1h-1zM531 723h1v1h-1zM531 737h1v1h-1zM531 751h1v1h-1zM531 765h1v1h-1zM531 779h1v1h-1zM531 793h1v1h-1zM531 806h1v3h-1zM531 821h1v1h-1zM531 835h1v1h-1zM531 849h1v1h-1zM531 863h1v1h-1zM531 877h1v1h-1zM545 21h1v1h-1zM545 35h1v1h-1zM545 49h1v1h-1zM545 63h1v1h-1zM545 77h1v1h-1zM545 91h1v1h-1zM545 104h1v3h-1zM545 119h1v1h-1zM545 133h1v1h-1zM545 147h1v1h-1zM545 162h1v1h-1zM545 176h1v1h-1zM545 190h1v1h-1zM545 204h1v1h-1zM545 218h1v1h-1zM545 232h1v1h-1zM545 245h1v3h-1zM545 260h1v1h-1zM545 274h1v1h-1zM545 288h1v1h-1zM545 302h1v1h-1zM545 316h1v1h-1zM545 330h1v1h-1zM545 344h1v1h-1zM545 358h1v1h-1zM545 372h1v1h-1zM545 385h1v3h-1zM545 400h1v1h-1zM545 414h1v1h-1zM545 428h1v1h-1zM545 442h1v1h-1zM545 456h1v1h-1zM545 470h1v1h-1zM545 484h1v1h-1zM545 498h1v1h-1zM545 512h1v1h-1zM545 525h1v3h-1zM545 540h1v1h-1zM545 554h1v1h-1zM545 568h1v1h-1zM545 582h1v1h-1zM545 596h1v1h-1zM545 610h1v1h-1zM545 625h1v1h-1zM545 639h1v1h-1zM545 653h1v1h-1zM545 666h1v3h-1zM545 681h1v1h-1zM545 695h1v1h-1zM545 709h1v1h-1zM545 723h1v1h-1zM545 737h1v1h-1zM545 751h1v1h-1zM545 765h1v1h-1zM545 779h1v1h-1zM545 793h1v1h-1zM545 806h1v3h-1zM545 821h1v1h-1zM545 835h1v1h-1zM545 849h1v1h-1zM545 863h1v1h-1zM545 877h1v1h-1zM559 21h1v1h-1zM559 35h1v1h-1zM559 49h1v1h-1zM559 63h1v1h-1zM559 77h1v1h-1zM559 91h1v1h-1zM559 104h1v3h-1zM559 119h1v1h-1zM559 133h1v1h-1zM559 147h1v1h-1zM559 162h1v1h-1zM559 176h1v1h-1zM559 190h1v1h-1zM559 204h1v1h-1zM559 218h1v1h-1zM559 232h1v1h-1zM559 245h1v3h-1zM559 260h1v1h-1zM559 274h1v1h-1zM559 288h1v1h-1zM559 302h1v1h-1zM559 316h1v1h-1zM559 330h1v1h-1zM559 344h1v1h-1zM559 358h1v1h-1zM559 372h1v1h-1zM559 385h1v3h-1zM559 400h1v1h-1zM559 414h1v1h-1zM559 428h1v1h-1zM559 442h1v1h-1zM559 456h1v1h-1zM559 470h1v1h-1zM559 484h1v1h-1zM559 498h1v1h-1zM559 512h1v1h-1zM559 525h1v3h-1zM559 540h1v1h-1zM559 554h1v1h-1zM559 568h1v1h-1zM559 582h1v1h-1zM559 596h1v1h-1zM559 610h1v1h-1zM559 625h1v1h-1zM559 639h1v1h-1zM559 653h1v1h-1zM559 666h1v3h-1zM559 681h1v1h-1zM559 695h1v1h-1zM559 709h1v1h-1zM559 723h1v1h-1zM559 737h1v1h-1zM559 751h1v1h-1zM559 765h1v1h-1zM559 779h1v1h-1zM559 793h1v1h-1zM559 806h1v3h-1zM559 821h1v1h-1zM559 835h1v1h-1zM559 849h1v1h-1zM559 863h1v1h-1zM559 877h1v1h-1zM573 21h1v1h-1zM573 35h1v1h-1zM573 49h1v1h-1zM573 63h1v1h-1zM573 77h1v1h-1zM573 91h1v1h-1zM573 104h1v3h-1zM573 119h1v1h-1zM573 133h1v1h-1zM573 147h1v1h-1zM573 162h1v1h-1zM573 176h1v1h-1zM573 190h1v1h-1zM573 204h1v1h-1zM573 218h1v1h-1zM573 232h1v1h-1zM573 245h1v3h-1zM573 260h1v1h-1zM573 274h1v1h-1zM573 288h1v1h-1zM573 302h1v1h-1zM573 316h1v1h-1zM573 330h1v1h-1zM573 344h1v1h-1zM573 358h1v1h-1zM573 372h1v1h-1zM573 385h1v3h-1zM573 400h1v1h-1zM573 414h1v1h-1zM573 428h1v1h-1zM573 442h1v1h-1zM573 456h1v1h-1zM573 470h1v1h-1zM573 484h1v1h-1zM573 498h1v1h-1zM573 512h1v1h-1zM573 525h1v3h-1zM573 540h1v1h-1zM573 554h1v1h-1zM573 568h1v1h-1zM573 582h1v1h-1zM573 596h1v1h-1zM573 610h1v1h-1zM573 625h1v1h-1zM573 639h1v1h-1zM573 653h1v1h-1zM573 666h1v3h-1zM573 681h1v1h-1zM573 695h1v1h-1zM573 709h1v1h-1zM573 723h1v1h-1zM573 737h1v1h-1zM573 751h1v1h-1zM573 765h1v1h-1zM573 779h1v1h-1zM573 793h1v1h-1zM573 806h1v3h-1zM573 821h1v1h-1zM573 835h1v1h-1zM573 849h1v1h-1zM573 863h1v1h-1zM573 877h1v1h-1zM586 21h3v1h-3zM586 35h3v1h-3zM586 49h3v1h-3zM586 63h3v1h-3zM586 77h3v1h-3zM586 91h3v1h-3zM586 104h3v3h-3zM586 119h3v1h-3zM586 133h3v1h-3zM586 147h3v1h-3zM586 162h3v1h-3zM586 176h3v1h-3zM586 190h3v1h-3zM586 204h3v1h-3zM586 218h3v1h-3zM586 232h3v1h-3zM586 245h3v3h-3zM586 260h3v1h-3zM586 274h3v1h-3zM586 288h3v1h-3zM586 302h3v1h-3zM586 316h3v1h-3zM586 330h3v1h-3zM586 344h3v1h-3zM586 358h3v1h-3zM586 372h3v1h-3zM586 385h3v3h-3zM586 400h3v1h-3zM586 414h3v1h-3zM586 428h3v1h-3zM586 442h3v1h-3zM586 456h3v1h-3zM586 470h3v1h-3zM586 484h3v1h-3zM586 498h3v1h-3zM586 512h3v1h-3zM586 525h3v3h-3zM586 540h3v1h-3zM586 554h3v1h-3zM586 568h3v1h-3zM586 582h3v1h-3zM586 596h3v1h-3zM586 610h3v1h-3zM586 625h3v1h-3zM586 639h3v1h-3zM586 653h3v1h-3zM586 666h3v3h-3zM586 681h3v1h-3zM586 695h3v1h-3zM586 709h3v1h-3zM586 723h3v1h-3zM586 737h3v1h-3zM586 751h3v1h-3zM586 765h3v1h-3zM586 779h3v1h-3zM586 793h3v1h-3zM586 806h3v3h-3zM586 821h3v1h-3zM586 835h3v1h-3zM586 849h3v1h-3zM586 863h3v1h-3zM586 877h3v1h-3z" fill="#8c8c8a"/>
<rect x="0" y="15" width="593" height="1" fill="#a0a0a0"/>
<rect x="593" y="15" width="1" height="868" fill="#a0a0a0"/>

<path d="M540 26.5H593M580.5 15V66" stroke="#a4abb3" stroke-width="1" fill="none"/>

<path d="M0 284.5H524.5M507 275.5L525 284.5L507 293.5" stroke="#c83434" stroke-width="3" fill="none" stroke-linecap="round" stroke-linejoin="round"/>

<path d="M0 373.2H517.6V883" stroke="#e8e8dc" stroke-width="1.3" fill="none"/>
<rect x="172.8" y="372" width="228.5" height="2" fill="#6e7680"/>

<g fill="none" stroke-width="1">
  <path d="M105.5 681.6V497.5H171.7V681.6" stroke="#ff26e2"/>
  <path d="M127.5 521V501.5H149.5V521" stroke="#f2eda1" stroke-width="3"/>
  <path d="M108.7 580V626M167.4 580V626" stroke="#f2eda1" stroke-width="3"/>
  <path d="M171.3 520.6V541.3" stroke="#f2eda1" stroke-width="2.5"/>
  <path d="M167.6 520.6V681" stroke="#f2eda1" stroke-width="2"/>
  <path d="M-5 627.6H44.8V762.7" stroke="#ff26e2"/>
  <path d="M-10 632 Q8 637 21 649" stroke="#f2eda1" stroke-width="3"/>
  <path d="M-10 642 Q5 646 15 655" stroke="#f2eda1" stroke-width="3"/>
  <path d="M43 794.4H220V890" stroke="#f2eda1" stroke-width="2"/>
  <path d="M43 796.2H100" stroke="#f2eda1" stroke-width="1.3"/>
  <path d="M254.5 851V890" stroke="#ff26e2" stroke-width="1"/>
  <path d="M259.3 851V890" stroke="#f2eda1" stroke-width="2"/>
  <path d="M261.5 851V890" stroke="#d8d8d8" stroke-width="1"/>
  <path d="M315.7 890V836.3H387.6V890" stroke="#ff26e2"/>
  <path d="M323.9 831H333.2L328.6 839.2Z" stroke="#f2eda1" stroke-width="1.5"/>
  <path d="M320 842.1H383.3V890" stroke="#f2eda1" stroke-width="2"/>
  <path d="M334 844.3H381V890" stroke="#e8b2a7" stroke-width="1"/>
  <path d="M322 844.8H357.1V890" stroke="#c4c4c4" stroke-width="1.2"/>
  <path d="M336 851L341 845.5" stroke="#afafaf" stroke-width="1"/>
</g>
<text transform="translate(101.70,0) rotate(-90) scale(0.9,1)" x="-714.54 -698.43 -681.54 -664.76 -650.10 -633.98" y="0" font-size="24.39" fill="#afafaf" font-family="Liberation Mono, monospace" stroke="#001023" stroke-width="0.3">ON/OFF</text>
<text transform="translate(143.00,0) rotate(-90) scale(0.85,1)" x="-720.90 -709.60 -700.78" y="0" font-size="15.15" fill="#afafaf" font-family="Liberation Mono, monospace" stroke="#001023" stroke-width="0.3">SW1</text>
<text transform="translate(189.80,0) rotate(-90) scale(0.9,1)" x="-692.10 -676.10 -660.21" y="0" font-size="24.39" fill="#f2eda1" font-family="Liberation Mono, monospace" stroke="#001023" stroke-width="0.2">SW1</text>
<text transform="translate(0,716.90) scale(0.9,1)" x="109.82 122.48" y="0" font-size="20.61" fill="#afafaf" font-family="Liberation Mono, monospace" stroke="#001023" stroke-width="0.3">D6</text>
<text transform="translate(0,780.40) scale(0.8,1)" x="44.28 56.53 66.78 84.03 99.28 111.03 124.53 153.03 170.53 187.41 204.16 233.03 249.53 269.03 288.41" y="0" font-size="25.30" fill="#afafaf" font-family="Liberation Mono, monospace" stroke="#001023" stroke-width="0.3">Transfo1OOOohms</text>
<text transform="translate(0,815.50) scale(0.82,1)" x="352.44 366.83 382.19 399.39 419.63 436.95" y="0" font-size="23.18" fill="#afafaf" font-family="Liberation Mono, monospace" stroke="#001023" stroke-width="0.3">8·Ohms</text>

<rect x="-10" y="399" width="510" height="500" fill="#c83434" fill-opacity="0.6" mask="url(#zm)"/>
<path d="M-10 400.5H499.5V890" stroke="#d03a3a" stroke-width="3" fill="none"/>
<path d="M-3.7 402L-8.9 405.6M6.3 402L1.1 405.6M16.3 402L11.1 405.6M26.3 402L21.1 405.6M36.3 402L31.1 405.6M46.3 402L41.1 405.6M56.3 402L51.1 405.6M66.3 402L61.1 405.6M76.3 402L71.1 405.6M86.3 402L81.1 405.6M96.3 402L91.1 405.6M106.3 402L101.1 405.6M116.3 402L111.1 405.6M126.3 402L121.1 405.6M136.3 402L131.1 405.6M146.3 402L141.1 405.6M156.3 402L151.1 405.6M166.3 402L161.1 405.6M176.3 402L171.1 405.6M186.3 402L181.1 405.6M196.3 402L191.1 405.6M206.3 402L201.1 405.6M216.3 402L211.1 405.6M226.3 402L221.1 405.6M236.3 402L231.1 405.6M246.3 402L241.1 405.6M256.3 402L251.1 405.6M266.3 402L261.1 405.6M276.3 402L271.1 405.6M286.3 402L281.1 405.6M296.3 402L291.1 405.6M306.3 402L301.1 405.6M316.3 402L311.1 405.6M326.3 402L321.1 405.6M336.3 402L331.1 405.6M346.3 402L341.1 405.6M356.3 402L351.1 405.6M366.3 402L361.1 405.6M376.3 402L371.1 405.6M386.3 402L381.1 405.6M396.3 402L391.1 405.6M406.3 402L401.1 405.6M416.3 402L411.1 405.6M426.3 402L421.1 405.6M436.3 402L431.1 405.6M446.3 402L441.1 405.6M456.3 402L451.1 405.6M466.3 402L461.1 405.6M476.3 402L471.1 405.6M486.3 402L481.1 405.6M496.3 402L491.1 405.6M498 407.8L492.8 411.4M498 414.8L492.8 418.4M498 421.8L492.8 425.4M498 428.8L492.8 432.4M498 435.8L492.8 439.4M498 442.8L492.8 446.4M498 449.8L492.8 453.4M498 456.8L492.8 460.4M498 463.8L492.8 467.4M498 470.8L492.8 474.4M498 477.8L492.8 481.4M498 484.8L492.8 488.4M498 491.8L492.8 495.4M498 498.8L492.8 502.4M498 505.8L492.8 509.4M498 512.8L492.8 516.4M498 519.8L492.8 523.4M498 526.8L492.8 530.4M498 533.8L492.8 537.4M498 540.8L492.8 544.4M498 547.8L492.8 551.4M498 554.8L492.8 558.4M498 561.8L492.8 565.4M498 568.8L492.8 572.4M498 575.8L492.8 579.4M498 582.8L492.8 586.4M498 589.8L492.8 593.4M498 596.8L492.8 600.4M498 603.8L492.8 607.4M498 610.8L492.8 614.4M498 617.8L492.8 621.4M498 624.8L492.8 628.4M498 631.8L492.8 635.4M498 638.8L492.8 642.4M498 645.8L492.8 649.4M498 652.8L492.8 656.4M498 659.8L492.8 663.4M498 666.8L492.8 670.4M498 673.8L492.8 677.4M498 680.8L492.8 684.4M498 687.8L492.8 691.4M498 694.8L492.8 698.4M498 701.8L492.8 705.4M498 708.8L492.8 712.4M498 715.8L492.8 719.4M498 722.8L492.8 726.4M498 729.8L492.8 733.4M498 736.8L492.8 740.4M498 743.8L492.8 747.4M498 750.8L492.8 754.4M498 757.8L492.8 761.4M498 764.8L492.8 768.4M498 771.8L492.8 775.4M498 778.8L492.8 782.4M498 785.8L492.8 789.4M498 792.8L492.8 796.4M498 799.8L492.8 803.4M498 806.8L492.8 810.4M498 813.8L492.8 817.4M498 820.8L492.8 824.4M498 827.8L492.8 831.4M498 834.8L492.8 838.4M498 841.8L492.8 845.4M498 848.8L492.8 852.4M498 855.8L492.8 859.4M498 862.8L492.8 866.4M498 869.8L492.8 873.4M498 876.8L492.8 880.4M498 883.8L492.8 887.4" stroke="#d03a3a" stroke-width="1.1" fill="none"/>

<g fill="none" stroke="#d83a3a" stroke-width="1">
  <rect x="107.2" y="517.5" width="61.8" height="61.7" rx="2"/>
  <rect x="107.2" y="625.2" width="61.8" height="61.4" rx="2"/>
  <rect x="-20" y="800.5" width="64.3" height="61.2" rx="2"/>
  <rect x="123" y="799" width="61" height="62" rx="2"/>
  <rect x="298.3" y="848.6" width="61.7" height="61.7" rx="2"/>
</g>
<g fill="none" stroke="#c83434" stroke-linejoin="round" stroke-linecap="round">
  <path d="M-40 428.2L348.4 428.2L447.6 527.4L447.6 900" stroke-width="56.4"/>
  <path d="M-40 548.25L138.7 548.25" stroke-width="55.5" stroke-linecap="butt"/>
  <path d="M138.7 655L55.4 655L15 695.4L15 830.2" stroke-width="56"/>
  <path d="M153.2 830.2L280.6 830.2L328.7 878.3" stroke-width="42"/>
</g>
<g fill="#c83434">
  <rect x="107" y="520.6" width="59.2" height="55.4"/>
  <rect x="107" y="627" width="59.2" height="56.3"/>
  <rect x="-20" y="801" width="63.1" height="57.8"/>
  <rect x="125.5" y="801.2" width="57.1" height="57.8"/>
  <rect x="300.6" y="850.9" width="55.5" height="56"/>
</g>
<circle cx="391.3" cy="470.2" r="6" fill="#e3b830"/>
<circle cx="447.3" cy="737.1" r="6" fill="#e3b830"/>
<g fill="#001023" stroke="#e0c030" stroke-width="1">
  <circle cx="138.7" cy="548.3" r="6.3"/>
  <circle cx="138.7" cy="655.3" r="6.3"/>
  <circle cx="15.4" cy="695.5" r="6.3"/>
  <circle cx="13.4" cy="830.2" r="8.3"/>
  <circle cx="153.2" cy="830.6" r="8.3"/>
  <circle cx="328.6" cy="879.4" r="12"/>
</g>
<text x="24.35" y="442.10" font-size="44.71" textLength="73.20" lengthAdjust="spacingAndGlyphs" fill="#efc3c3" stroke="#efc3c3" stroke-width="0.45">GND</text>
<text transform="translate(461.30,667.00) rotate(-90)" x="-1.65" y="0" font-size="45.71" textLength="73.52" lengthAdjust="spacingAndGlyphs" fill="#efc3c3" stroke="#efc3c3" stroke-width="0.45">GND</text>
<text transform="translate(461.30,944.50) rotate(-90)" x="-1.65" y="0" font-size="45.71" textLength="73.52" lengthAdjust="spacingAndGlyphs" fill="#efc3c3" stroke="#efc3c3" stroke-width="0.45">GND</text>
<text x="-53.00" y="562.80" font-size="46.14" textLength="91.40" lengthAdjust="spacingAndGlyphs" fill="#efc3c3" stroke="#efc3c3" stroke-width="0.45">+VDC</text>
<text x="130.99" y="543.00" font-size="26.96" textLength="14.19" lengthAdjust="spacingAndGlyphs" fill="#efc3c3" >1</text>
<text x="115.15" y="570.40" font-size="20.00" textLength="45.75" lengthAdjust="spacingAndGlyphs" fill="#efc3c3" >+VDC</text>
<text x="131.68" y="649.70" font-size="26.00" textLength="13.57" lengthAdjust="spacingAndGlyphs" fill="#efc3c3" >2</text>
<text x="121.07" y="677.50" font-size="20.00" textLength="33.77" lengthAdjust="spacingAndGlyphs" fill="#efc3c3" >+9V</text>
<text x="10.01" y="689.70" font-size="17.00" textLength="9.90" lengthAdjust="spacingAndGlyphs" fill="#efc3c3" >2</text>
<text x="2.29" y="712.00" font-size="15.29" textLength="25.71" lengthAdjust="spacingAndGlyphs" fill="#efc3c3" >+9V</text>
<text x="6.36" y="822.60" font-size="23.62" textLength="12.15" lengthAdjust="spacingAndGlyphs" fill="#efc3c3" >1</text>
<text x="-1.38" y="853.00" font-size="20.86" textLength="31.81" lengthAdjust="spacingAndGlyphs" fill="#efc3c3" >+9V</text>
<text x="146.97" y="821.60" font-size="22.61" textLength="14.87" lengthAdjust="spacingAndGlyphs" fill="#efc3c3" >4</text>
<text x="126.94" y="842.00" font-size="9.85" textLength="54.43" lengthAdjust="spacingAndGlyphs" fill="#e4d4d4" font-family="Liberation Mono, monospace" stroke="#c83434" stroke-width="0.35">Net-(T1-S8)</text>
<text x="322.09" y="873.80" font-size="27.25" textLength="13.42" lengthAdjust="spacingAndGlyphs" fill="#e0d4d4" >1</text>
</svg>


<svg width="35" height="868" viewBox="594 15 35 868" style="position:absolute;left:594px;top:15px">
<g>
 <rect x="596.5" y="20.5" width="29" height="29" fill="#b6d6f2" stroke="#0a78d4" stroke-width="1"/>
 <path d="M606.3 27.3V40L609 37.5L612 41.8L614 40.6L611.4 36.3L615.2 35.8Z" fill="#4f4f4f" stroke="#4f4f4f" stroke-width="1" stroke-linejoin="round"/>
 <path d="M601.2 55.3L622.9 77M601.2 78.7L622.9 57" stroke="#5a5a5a" stroke-width="1.5"/>
 <circle cx="611" cy="66.8" r="2.8" fill="#fff" stroke="#5a5a5a" stroke-width="1.2"/>
 <path d="M598 86.5H624" stroke="#6a6a6a" stroke-width="1"/>
 <!-- footprint -->
 <path d="M599.5 98H622.5V115.5H599.5V109L601 107.5V105.5L599.5 104Z" fill="none" stroke="#555" stroke-width="1.3"/>
 <g fill="#1a7fc8"><rect x="602" y="95.2" width="5" height="6.5"/><rect x="609.2" y="95.2" width="5" height="6.5"/><rect x="616" y="95.2" width="5" height="6.5"/><rect x="602" y="112.2" width="5" height="6.5"/><rect x="609.2" y="112.2" width="5" height="6.5"/><rect x="616" y="112.2" width="5" height="6.5"/></g>
 <!-- route -->
 <path d="M600.7 149.1L605.5 138.6H617L621 128.5" fill="none" stroke="#1a7fc8" stroke-width="2.2"/>
 <path d="M619 154H626V147Z" fill="#000"/>
 <!-- meander -->
 <path d="M599.6 171H602.5Q603 177.5 605 177.5Q607 177.5 607 171V168.5Q607 165 609 165Q611 165 611 168.5V172Q611 175.5 613 175.5Q615 175.5 615 172V168.5Q615 165 617 165Q619 165 619 168.5V171H622.5" fill="none" stroke="#1a7fc8" stroke-width="1.8"/>
 <path d="M619 186.2H626V179Z" fill="#000"/>
 <!-- via -->
 <circle cx="610.9" cy="202.8" r="5" fill="none" stroke="#f0900a" stroke-width="4"/>
 <!-- zone (active) -->
 <rect x="596.5" y="220.5" width="29" height="29" fill="#b9d8f2" stroke="#0a78d4" stroke-width="1"/>
 <path d="M601 245V235H607V225H621V245Z" fill="#1a7fc8"/>
 <circle cx="616.6" cy="234" r="3.8" fill="#b9d8f2"/>
 <circle cx="615.8" cy="234" r="1.8" fill="#505050"/>
 <path d="M616 234H621" stroke="#505050" stroke-width="1.3"/>
 <!-- hatched zone -->
 <clipPath id="hz"><path d="M601.4 276.6V267.2H607.4V257.4H621V276.6Z"/></clipPath>
 <path d="M601.4 276.6V267.2H607.4V257.4H621V276.6Z" fill="#fff"/>
 <g clip-path="url(#hz)"><path d="M596 258L616 278M596 264L616 284M602 258L622 278M608 258L628 278M590 258L610 278" stroke="#4a4a4a" stroke-width="1.6"/></g>
 <path d="M601.4 276.6V267.2H607.4V257.4H621V276.6Z" fill="none" stroke="#4a4a4a" stroke-width="1.2"/>
 <!-- separator -->
 <path d="M598 286.5H624" stroke="#6a6a6a" stroke-width="1"/>
 <!-- line -->
 <path d="M601.8 316L620.3 298" stroke="#4a4a4a" stroke-width="2" stroke-linecap="round"/>
 <!-- arc -->
 <path d="M602 347.5A18.6 18.6 0 0 1 620.6 329.8" fill="none" stroke="#4a4a4a" stroke-width="2"/>
 <!-- rect -->
 <rect x="602" y="362.8" width="18.2" height="16" fill="#c2c2c2" stroke="#4a4a4a" stroke-width="1.5"/>
 <!-- circle -->
 <circle cx="611" cy="402.7" r="9" fill="#c2c2c2" stroke="#4a4a4a" stroke-width="1.5"/>
 <!-- polygon -->
 <path d="M602 425.5L620.5 428.3L618.3 440.3L603 444.3L609.5 436.6Z" fill="#c2c2c2" stroke="#4a4a4a" stroke-width="1.5" stroke-linejoin="round"/>
 <!-- bezier -->
 <path d="M604.8 476Q603 468 610.5 466.3Q617.5 464.5 616.6 457.5" fill="none" stroke="#4a4a4a" stroke-width="1.8"/>
 <path d="M600.5 466.3H620.5" stroke="#1a7fc8" stroke-width="1.2"/>
 <rect x="599.8" y="464.3" width="4" height="4" fill="#1a7fc8"/><rect x="617.6" y="464.3" width="4" height="4" fill="#1a7fc8"/>
 <circle cx="610.5" cy="466.3" r="1.6" fill="#fff" stroke="#1a7fc8" stroke-width="1"/>
 <!-- image -->
 <rect x="600.2" y="488" width="21.5" height="21.8" rx="3" fill="#4f4f4f"/>
 <path d="M602.6 506.8L608.5 497.5L612.5 503L615 500.5L619.3 506.8Z" fill="#fff"/>
 <circle cx="614.8" cy="493.6" r="2.4" fill="#fff"/>
 <!-- T -->
 <path d="M603 521.1H619V523.9H612.9V540.7H609V523.9H603Z" fill="#4f4f4f"/>
 <!-- textbox -->
 <rect x="602.3" y="555" width="17.7" height="15.8" fill="#c2c2c2" stroke="#4a4a4a" stroke-width="2"/>
 <path d="M605.5 559.5H614.5M605.5 562.5H613M605.5 565.5H614.5" stroke="#4a4a4a" stroke-width="1"/>
 <!-- table -->
 <rect x="599.6" y="583.5" width="22.8" height="22.8" fill="#fff" stroke="#4a4a4a" stroke-width="1"/>
 <rect x="600" y="584" width="22" height="5.5" fill="#c2c2c2"/>
 <path d="M599.6 589.5H622.4M599.6 595.5H622.4M599.6 601H622.4M607.5 583.5V606.3M615 583.5V606.3M599.6 583.5H622.4" stroke="#4a4a4a" stroke-width="1" fill="none"/>
 <!-- dimension -->
 <path d="M602.2 618.1H622M611 635.1H622M620.5 620V633" stroke="#4a4a4a" stroke-width="1.1" fill="none"/>
 <path d="M618.8 623L620.5 619.5L622.2 623M618.8 630L620.5 633.5L622.2 630" stroke="#4a4a4a" stroke-width="1" fill="none"/>
 <circle cx="602.2" cy="618.1" r="2.8" fill="#1a7fc8"/><circle cx="611" cy="635.1" r="2.8" fill="#1a7fc8"/>
 <path d="M619 641.5H626V634.8Z" fill="#000"/>
 <!-- delete -->
 <path d="M602.8 648.3V666L606.5 662.5L610 669L613 667.5L610 661.5L615.5 661Z" fill="#555"/>
 <circle cx="615.7" cy="664" r="6.8" fill="#c8203a"/>
 <path d="M613 661.3L618.4 666.7M618.4 661.3L613 666.7" stroke="#fff" stroke-width="1.8"/>
 <path d="M598 678.3H624" stroke="#6a6a6a" stroke-width="1"/>
 <!-- grid -->
 <g fill="#555"><circle cx="602" cy="690" r="1.3"/><circle cx="608" cy="690" r="1.3"/><circle cx="614" cy="690" r="1.3"/><circle cx="620" cy="690" r="1.3"/>
 <circle cx="602" cy="696" r="1.3"/><circle cx="608" cy="696" r="1.3"/><circle cx="614" cy="696" r="1.3"/><circle cx="620" cy="696" r="1.3"/>
 <circle cx="602" cy="702" r="1.3"/><circle cx="614" cy="702" r="1.3"/><circle cx="620" cy="702" r="1.3"/>
 <circle cx="602" cy="708" r="1.3"/><circle cx="608" cy="708" r="1.3"/><circle cx="614" cy="708" r="1.3"/><circle cx="620" cy="708" r="1.3"/></g>
 <path d="M602.5 702H613.5M608 696.5V707.5" stroke="#1a7fc8" stroke-width="2"/>
 <path d="M619 713.6H626V706.8Z" fill="#000"/>
 <!-- ruler -->
 <path d="M601.5 737L617 721.5L622 726.5L606.5 742Z" fill="none" stroke="#4a4a4a" stroke-width="1.8" stroke-linejoin="round"/>
 <path d="M607 734.5L608.5 736M610 731.5L612 733.5M613 728.5L614.5 730M616 725.5L618 727.5" stroke="#4a4a4a" stroke-width="1.2"/>
</g>
</svg>


<svg width="858" height="883" viewBox="0 0 858 883" style="position:absolute;left:0;top:0" font-family="Liberation Sans, sans-serif">
<rect x="628" y="15" width="4" height="868" fill="#dadada"/>
<rect x="632" y="15" width="226" height="21.4" fill="#bababa"/>
<text x="635.50" y="28.80" font-size="12.75" textLength="56.85" lengthAdjust="spacingAndGlyphs" fill="#000" >Apparence</text>
<rect x="632.5" y="63.5" width="225.5" height="820" fill="#fff"/>
<path d="M693.5 63.5V44H739.5V63.5M739.5 44H785.7V63.5" fill="#f0f0f0" stroke="#d9d9d9" stroke-width="1"/>
<path d="M693.5 63.5H858" stroke="#d9d9d9" stroke-width="1"/>
<path d="M632.7 64V41.8H693.5V64" fill="#fff" stroke="#d9d9d9" stroke-width="1"/>
<rect x="633.2" y="42.3" width="59.8" height="22" fill="#fff"/>
<text x="639.91" y="55.70" font-size="11.59" textLength="46.22" lengthAdjust="spacingAndGlyphs" fill="#000" >Couches</text>
<text x="697.66" y="58.40" font-size="11.59" textLength="34.76" lengthAdjust="spacingAndGlyphs" fill="#000" >Objets</text>
<text x="745.01" y="58.40" font-size="12.17" textLength="25.44" lengthAdjust="spacingAndGlyphs" fill="#000" >Nets</text>
<rect x="636" y="65" width="222" height="818" fill="#f0f0f0"/>
<rect x="636" y="65.5" width="222" height="17.5" fill="#dcdcdc"/>
<path d="M640.7 69.9L646.3 74.55L640.7 79.2Z" fill="#3535f5"/>
<rect x="652" y="69.2" width="14" height="11" fill="#c83434"/>
<g transform="translate(671.0,65.8)"><circle cx="9" cy="9" r="8.9" fill="#fafafa"/><circle cx="9" cy="9" r="7.9" fill="#555"/><path d="M2.7 9Q9 1.4 15.3 9Q9 16.6 2.7 9Z" fill="#fff"/><circle cx="9" cy="9" r="2.3" fill="#5a5a5a"/><circle cx="9" cy="9" r="1.1" fill="#fff"/></g>
<rect x="652" y="87.2" width="14" height="11" fill="#4d7fc4"/>
<g transform="translate(671.0,83.8)"><circle cx="9" cy="9" r="8.9" fill="#fafafa"/><circle cx="9" cy="9" r="7.9" fill="#555"/><path d="M2.7 9Q9 1.4 15.3 9Q9 16.6 2.7 9Z" fill="#fff"/><circle cx="9" cy="9" r="2.3" fill="#5a5a5a"/><circle cx="9" cy="9" r="1.1" fill="#fff"/></g>
<rect x="652" y="105.2" width="14" height="11" fill="#84008a"/>
<g transform="translate(671.0,101.8)"><circle cx="9" cy="9" r="8.9" fill="#fafafa"/><circle cx="9" cy="9" r="7.9" fill="#555"/><path d="M2.7 9Q9 1.4 15.3 9Q9 16.6 2.7 9Z" fill="#fff"/><circle cx="9" cy="9" r="2.3" fill="#5a5a5a"/><circle cx="9" cy="9" r="1.1" fill="#fff"/></g>
<rect x="652" y="123.2" width="14" height="11" fill="#000084"/>
<g transform="translate(671.0,119.8)"><circle cx="9" cy="9" r="8.9" fill="#fafafa"/><circle cx="9" cy="9" r="7.9" fill="#555"/><path d="M2.7 9Q9 1.4 15.3 9Q9 16.6 2.7 9Z" fill="#fff"/><circle cx="9" cy="9" r="2.3" fill="#5a5a5a"/><circle cx="9" cy="9" r="1.1" fill="#fff"/></g>
<rect x="652" y="141.2" width="14" height="11" fill="#a08e88"/>
<path d="M656.7 141.2h4.6v5.5h-4.6zM652 146.7h4.7v5.5h-4.7zM661.3 146.7h4.7v5.5h-4.7z" fill="#9c8a84"/>
<g transform="translate(671.0,137.8)"><circle cx="9" cy="9" r="8.9" fill="#fafafa"/><circle cx="9" cy="9" r="7.9" fill="#555"/><path d="M2.7 9Q9 1.4 15.3 9Q9 16.6 2.7 9Z" fill="#fff"/><circle cx="9" cy="9" r="2.3" fill="#5a5a5a"/><circle cx="9" cy="9" r="1.1" fill="#fff"/></g>
<rect x="652" y="159.2" width="14" height="11" fill="#00c2c2"/>
<path d="M656.7 159.2h4.6v5.5h-4.6zM652 164.7h4.7v5.5h-4.7zM661.3 164.7h4.7v5.5h-4.7z" fill="#00bcbc"/>
<g transform="translate(671.0,155.8)"><circle cx="9" cy="9" r="8.9" fill="#fafafa"/><circle cx="9" cy="9" r="7.9" fill="#555"/><path d="M2.7 9Q9 1.4 15.3 9Q9 16.6 2.7 9Z" fill="#fff"/><circle cx="9" cy="9" r="2.3" fill="#5a5a5a"/><circle cx="9" cy="9" r="1.1" fill="#fff"/></g>
<rect x="652" y="177.2" width="14" height="11" fill="#f2eda1"/>
<g transform="translate(671.0,173.8)"><circle cx="9" cy="9" r="8.9" fill="#fafafa"/><circle cx="9" cy="9" r="7.9" fill="#555"/><path d="M2.7 9Q9 1.4 15.3 9Q9 16.6 2.7 9Z" fill="#fff"/><circle cx="9" cy="9" r="2.3" fill="#5a5a5a"/><circle cx="9" cy="9" r="1.1" fill="#fff"/></g>
<rect x="652" y="195.2" width="14" height="11" fill="#e8b2a7"/>
<g transform="translate(671.0,191.8)"><circle cx="9" cy="9" r="8.9" fill="#fafafa"/><circle cx="9" cy="9" r="7.9" fill="#555"/><path d="M2.7 9Q9 1.4 15.3 9Q9 16.6 2.7 9Z" fill="#fff"/><circle cx="9" cy="9" r="2.3" fill="#5a5a5a"/><circle cx="9" cy="9" r="1.1" fill="#fff"/></g>
<rect x="652" y="213.2" width="14" height="11" fill="#6c3c86"/>
<path d="M656.7 213.2h4.6v5.5h-4.6zM652 218.7h4.7v5.5h-4.7zM661.3 218.7h4.7v5.5h-4.7z" fill="#4f2166"/>
<g transform="translate(671.0,209.8)"><circle cx="9" cy="9" r="8.9" fill="#fafafa"/><circle cx="9" cy="9" r="7.9" fill="#555"/><path d="M2.7 9Q9 1.4 15.3 9Q9 16.6 2.7 9Z" fill="#fff"/><circle cx="9" cy="9" r="2.3" fill="#5a5a5a"/><circle cx="9" cy="9" r="1.1" fill="#fff"/></g>
<rect x="652" y="231.2" width="14" height="11" fill="#187a6e"/>
<path d="M656.7 231.2h4.6v5.5h-4.6zM652 236.7h4.7v5.5h-4.7zM661.3 236.7h4.7v5.5h-4.7z" fill="#065a50"/>
<g transform="translate(671.0,227.8)"><circle cx="9" cy="9" r="8.9" fill="#fafafa"/><circle cx="9" cy="9" r="7.9" fill="#555"/><path d="M2.7 9Q9 1.4 15.3 9Q9 16.6 2.7 9Z" fill="#fff"/><circle cx="9" cy="9" r="2.3" fill="#5a5a5a"/><circle cx="9" cy="9" r="1.1" fill="#fff"/></g>
<rect x="652" y="249.2" width="14" height="11" fill="#c2c2c2"/>
<g transform="translate(671.0,245.8)"><circle cx="9" cy="9" r="8.9" fill="#fafafa"/><circle cx="9" cy="9" r="7.9" fill="#555"/><path d="M2.7 9Q9 1.4 15.3 9Q9 16.6 2.7 9Z" fill="#fff"/><circle cx="9" cy="9" r="2.3" fill="#5a5a5a"/><circle cx="9" cy="9" r="1.1" fill="#fff"/></g>
<rect x="652" y="267.2" width="14" height="11" fill="#598bd9"/>
<g transform="translate(671.0,263.8)"><circle cx="9" cy="9" r="8.9" fill="#fafafa"/><circle cx="9" cy="9" r="7.9" fill="#555"/><path d="M2.7 9Q9 1.4 15.3 9Q9 16.6 2.7 9Z" fill="#fff"/><circle cx="9" cy="9" r="2.3" fill="#5a5a5a"/><circle cx="9" cy="9" r="1.1" fill="#fff"/></g>
<rect x="652" y="285.2" width="14" height="11" fill="#b4dbd2"/>
<g transform="translate(671.0,281.8)"><circle cx="9" cy="9" r="8.9" fill="#fafafa"/><circle cx="9" cy="9" r="7.9" fill="#555"/><path d="M2.7 9Q9 1.4 15.3 9Q9 16.6 2.7 9Z" fill="#fff"/><circle cx="9" cy="9" r="2.3" fill="#5a5a5a"/><circle cx="9" cy="9" r="1.1" fill="#fff"/></g>
<rect x="652" y="303.2" width="14" height="11" fill="#d6c852"/>
<g transform="translate(671.0,299.8)"><circle cx="9" cy="9" r="8.9" fill="#fafafa"/><circle cx="9" cy="9" r="7.9" fill="#555"/><path d="M2.7 9Q9 1.4 15.3 9Q9 16.6 2.7 9Z" fill="#fff"/><circle cx="9" cy="9" r="2.3" fill="#5a5a5a"/><circle cx="9" cy="9" r="1.1" fill="#fff"/></g>
<rect x="652" y="321.2" width="14" height="11" fill="#d0d2cd"/>
<g transform="translate(671.0,317.8)"><circle cx="9" cy="9" r="8.9" fill="#fafafa"/><circle cx="9" cy="9" r="7.9" fill="#555"/><path d="M2.7 9Q9 1.4 15.3 9Q9 16.6 2.7 9Z" fill="#fff"/><circle cx="9" cy="9" r="2.3" fill="#5a5a5a"/><circle cx="9" cy="9" r="1.1" fill="#fff"/></g>
<rect x="652" y="339.2" width="14" height="11" fill="#ff26e2"/>
<g transform="translate(671.0,335.8)"><circle cx="9" cy="9" r="8.9" fill="#fafafa"/><circle cx="9" cy="9" r="7.9" fill="#555"/><path d="M2.7 9Q9 1.4 15.3 9Q9 16.6 2.7 9Z" fill="#fff"/><circle cx="9" cy="9" r="2.3" fill="#5a5a5a"/><circle cx="9" cy="9" r="1.1" fill="#fff"/></g>
<rect x="652" y="357.2" width="14" height="11" fill="#ff26e2"/>
<g transform="translate(671.0,353.8)"><circle cx="9" cy="9" r="8.9" fill="#fafafa"/><circle cx="9" cy="9" r="7.9" fill="#555"/><path d="M2.7 9Q9 1.4 15.3 9Q9 16.6 2.7 9Z" fill="#fff"/><circle cx="9" cy="9" r="2.3" fill="#5a5a5a"/><circle cx="9" cy="9" r="1.1" fill="#fff"/></g>
<rect x="652" y="375.2" width="14" height="11" fill="#26e9ff"/>
<g transform="translate(671.0,371.8)"><circle cx="9" cy="9" r="8.9" fill="#fafafa"/><circle cx="9" cy="9" r="7.9" fill="#555"/><path d="M2.7 9Q9 1.4 15.3 9Q9 16.6 2.7 9Z" fill="#fff"/><circle cx="9" cy="9" r="2.3" fill="#5a5a5a"/><circle cx="9" cy="9" r="1.1" fill="#fff"/></g>
<rect x="652" y="393.2" width="14" height="11" fill="#afafaf"/>
<g transform="translate(671.0,389.8)"><circle cx="9" cy="9" r="8.9" fill="#fafafa"/><circle cx="9" cy="9" r="7.9" fill="#555"/><path d="M2.7 9Q9 1.4 15.3 9Q9 16.6 2.7 9Z" fill="#fff"/><circle cx="9" cy="9" r="2.3" fill="#5a5a5a"/><circle cx="9" cy="9" r="1.1" fill="#fff"/></g>
<rect x="652" y="411.2" width="14" height="11" fill="#585d84"/>
<g transform="translate(671.0,407.8)"><circle cx="9" cy="9" r="8.9" fill="#fafafa"/><circle cx="9" cy="9" r="7.9" fill="#555"/><path d="M2.7 9Q9 1.4 15.3 9Q9 16.6 2.7 9Z" fill="#fff"/><circle cx="9" cy="9" r="2.3" fill="#5a5a5a"/><circle cx="9" cy="9" r="1.1" fill="#fff"/></g>
<rect x="652" y="429.2" width="14" height="11" fill="#c2c2c2"/>
<g transform="translate(671.0,425.8)"><circle cx="9" cy="9" r="8.9" fill="#fafafa"/><circle cx="9" cy="9" r="7.9" fill="#555"/><path d="M2.7 9Q9 1.4 15.3 9Q9 16.6 2.7 9Z" fill="#fff"/><circle cx="9" cy="9" r="2.3" fill="#5a5a5a"/><circle cx="9" cy="9" r="1.1" fill="#fff"/></g>
<rect x="652" y="447.2" width="14" height="11" fill="#598bd9"/>
<g transform="translate(671.0,443.8)"><circle cx="9" cy="9" r="8.9" fill="#fafafa"/><circle cx="9" cy="9" r="7.9" fill="#555"/><path d="M2.7 9Q9 1.4 15.3 9Q9 16.6 2.7 9Z" fill="#fff"/><circle cx="9" cy="9" r="2.3" fill="#5a5a5a"/><circle cx="9" cy="9" r="1.1" fill="#fff"/></g>
<rect x="652" y="465.2" width="14" height="11" fill="#b4dbd2"/>
<g transform="translate(671.0,461.8)"><circle cx="9" cy="9" r="8.9" fill="#fafafa"/><circle cx="9" cy="9" r="7.9" fill="#555"/><path d="M2.7 9Q9 1.4 15.3 9Q9 16.6 2.7 9Z" fill="#fff"/><circle cx="9" cy="9" r="2.3" fill="#5a5a5a"/><circle cx="9" cy="9" r="1.1" fill="#fff"/></g>
<rect x="652" y="483.2" width="14" height="11" fill="#d6c852"/>
<g transform="translate(671.0,479.8)"><circle cx="9" cy="9" r="8.9" fill="#fafafa"/><circle cx="9" cy="9" r="7.9" fill="#555"/><path d="M2.7 9Q9 1.4 15.3 9Q9 16.6 2.7 9Z" fill="#fff"/><circle cx="9" cy="9" r="2.3" fill="#5a5a5a"/><circle cx="9" cy="9" r="1.1" fill="#fff"/></g>
<text x="692.67" y="78.90" font-size="11.14" textLength="23.90" lengthAdjust="spacingAndGlyphs" fill="#000" stroke="#000" stroke-width="0.12">F.Cu</text>
<text x="692.73" y="96.90" font-size="11.14" textLength="24.21" lengthAdjust="spacingAndGlyphs" fill="#000" stroke="#000" stroke-width="0.12">B.Cu</text>
<text x="692.69" y="114.90" font-size="10.76" textLength="55.85" lengthAdjust="spacingAndGlyphs" fill="#000" stroke="#000" stroke-width="0.12">F.Adhesive</text>
<text x="692.71" y="132.90" font-size="10.76" textLength="55.97" lengthAdjust="spacingAndGlyphs" fill="#000" stroke="#000" stroke-width="0.12">B.Adhesive</text>
<text x="692.72" y="150.90" font-size="11.30" textLength="36.57" lengthAdjust="spacingAndGlyphs" fill="#000" stroke="#000" stroke-width="0.12">F.Paste</text>
<text x="692.76" y="168.90" font-size="11.30" textLength="36.73" lengthAdjust="spacingAndGlyphs" fill="#000" stroke="#000" stroke-width="0.12">B.Paste</text>
<text x="692.70" y="186.90" font-size="10.76" textLength="60.54" lengthAdjust="spacingAndGlyphs" fill="#000" stroke="#000" stroke-width="0.12">F.Silkscreen</text>
<text x="692.73" y="204.90" font-size="10.76" textLength="60.71" lengthAdjust="spacingAndGlyphs" fill="#000" stroke="#000" stroke-width="0.12">B.Silkscreen</text>
<text x="692.68" y="222.90" font-size="10.76" textLength="36.24" lengthAdjust="spacingAndGlyphs" fill="#000" stroke="#000" stroke-width="0.12">F.Mask</text>
<text x="692.73" y="240.90" font-size="10.76" textLength="36.36" lengthAdjust="spacingAndGlyphs" fill="#000" stroke="#000" stroke-width="0.12">B.Mask</text>
<text x="692.74" y="258.90" font-size="10.76" textLength="74.69" lengthAdjust="spacingAndGlyphs" fill="#000" stroke="#000" stroke-width="0.12">User.Drawings</text>
<text x="692.80" y="276.90" font-size="11.14" textLength="76.15" lengthAdjust="spacingAndGlyphs" fill="#000" stroke="#000" stroke-width="0.12">User.Comments</text>
<text x="692.78" y="294.90" font-size="11.30" textLength="50.35" lengthAdjust="spacingAndGlyphs" fill="#000" stroke="#000" stroke-width="0.12">User.Eco1</text>
<text x="692.77" y="312.90" font-size="11.14" textLength="50.92" lengthAdjust="spacingAndGlyphs" fill="#000" stroke="#000" stroke-width="0.12">User.Eco2</text>
<text x="692.70" y="330.90" font-size="10.76" textLength="52.28" lengthAdjust="spacingAndGlyphs" fill="#000" stroke="#000" stroke-width="0.12">Edge.Cuts</text>
<text x="692.60" y="348.90" font-size="10.76" textLength="38.24" lengthAdjust="spacingAndGlyphs" fill="#000" stroke="#000" stroke-width="0.12">Margin</text>
<text x="692.66" y="366.90" font-size="10.76" textLength="60.75" lengthAdjust="spacingAndGlyphs" fill="#000" stroke="#000" stroke-width="0.12">F.Courtyard</text>
<text x="692.69" y="384.90" font-size="10.76" textLength="60.86" lengthAdjust="spacingAndGlyphs" fill="#000" stroke="#000" stroke-width="0.12">B.Courtyard</text>
<text x="692.69" y="402.90" font-size="10.76" textLength="28.48" lengthAdjust="spacingAndGlyphs" fill="#000" stroke="#000" stroke-width="0.12">F.Fab</text>
<text x="692.74" y="420.90" font-size="10.76" textLength="28.62" lengthAdjust="spacingAndGlyphs" fill="#000" stroke="#000" stroke-width="0.12">B.Fab</text>
<text x="692.76" y="438.90" font-size="11.30" textLength="32.24" lengthAdjust="spacingAndGlyphs" fill="#000" stroke="#000" stroke-width="0.12">User.1</text>
<text x="692.75" y="456.90" font-size="11.14" textLength="32.72" lengthAdjust="spacingAndGlyphs" fill="#000" stroke="#000" stroke-width="0.12">User.2</text>
<text x="692.75" y="474.90" font-size="11.14" textLength="32.60" lengthAdjust="spacingAndGlyphs" fill="#000" stroke="#000" stroke-width="0.12">User.3</text>
<text x="692.76" y="492.90" font-size="11.30" textLength="32.48" lengthAdjust="spacingAndGlyphs" fill="#000" stroke="#000" stroke-width="0.12">User.4</text>
</svg>


<div style="position:absolute;left:615.5px;top:258.4px;width:209px;height:19.4px;box-sizing:border-box;background:#fff;border:1px solid #767676;box-shadow:3px 3px 3px rgba(0,0,0,0.38)"></div>
<svg width="858" height="883" viewBox="0 0 858 883" style="position:absolute;left:0;top:0" font-family="Liberation Sans, sans-serif">
<text x="621.77" y="271.70" font-size="12.00" textLength="196.35" lengthAdjust="spacingAndGlyphs" fill="#575757" xml:space="preserve" style="white-space:pre">Tracer Zones Remplies  (Ctrl+Shift+Z)</text>
</svg>

</body></html>
